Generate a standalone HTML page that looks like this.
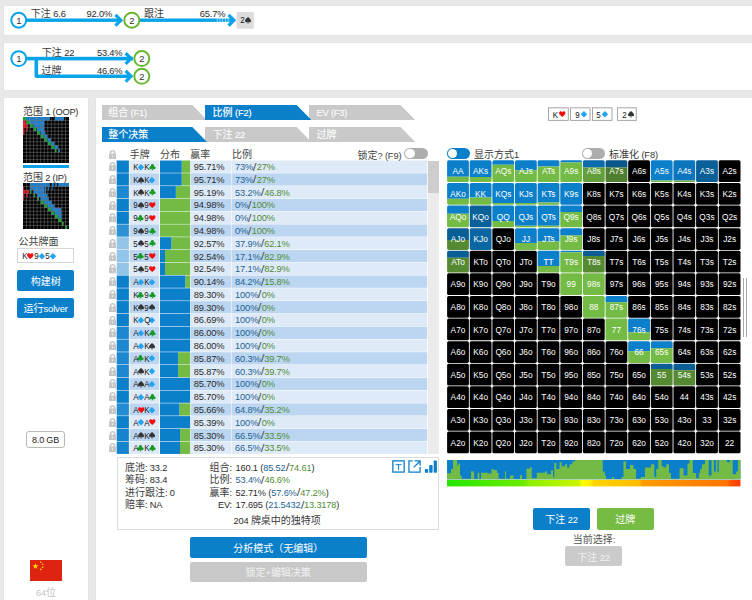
<!DOCTYPE html>
<html lang="zh"><head><meta charset="utf-8"><title>solver</title><style>
html,body{margin:0;padding:0}
body{width:752px;height:600px;overflow:hidden;position:relative;background:#e8e8e8;font-family:"Liberation Sans", "Noto Sans CJK SC", sans-serif;font-size:9px;color:#333}
.abs{position:absolute}
.panel{position:absolute;background:#fff;border-radius:1px;box-shadow:0 0 0 0.6px #e0e0e0}
.t{position:absolute;white-space:nowrap;overflow:visible;letter-spacing:-0.16px}
.tb{-webkit-text-stroke:0.15px currentColor}
.btn{text-align:center;font-size:9.3px}
span.cj{font-family:"Liberation Sans", "Noto Sans CJK SC", sans-serif;font-size:10px;letter-spacing:0;color:#3c3c3c}
svg.su{display:inline-block;overflow:visible}
.rk{display:inline-block;width:5px;text-align:center;transform:scaleX(.86);color:#141414}
.sl{display:inline-block;font-size:11px;line-height:0;width:3.5px;text-indent:0;color:#555;position:relative;top:0.5px;transform:scaleX(1.2)}
.mc{position:absolute;color:#fff;text-align:center;font-size:8.3px;overflow:hidden}
</style></head>
<body>
<svg width="0" height="0" style="position:absolute"><defs><path id="sh" d="M50 92C22 66 9 50 9 33 9 19 19 9 31 9c8 0 15 4 19 12 4-8 11-12 19-12 12 0 22 10 22 24 0 17-13 33-41 59z"/><path id="sd" d="M50 3Q72 26 95 50Q72 74 50 97Q28 74 5 50Q28 26 50 3z"/><path id="ss" d="M50 5C50 5 9 38 9 60c0 12 9 20 20 20 8 0 14-4 18-10-1 10-5 18-12 25h30c-7-7-11-15-12-25 4 6 10 10 18 10 11 0 20-8 20-20C91 38 50 5 50 5z"/><path id="sc" d="M50 5a20 20 0 0 1 14 34 20 20 0 1 1-11 31c1 10 5 18 12 25H35c7-7 11-15 12-25a20 20 0 1 1-11-31A20 20 0 0 1 50 5z"/></defs></svg>
<div class="panel" style="left:3.8px;top:5.7px;width:760px;height:29px"></div>
<div class="panel" style="left:3.8px;top:43px;width:760px;height:46.7px"></div>
<div class="panel" style="left:3.8px;top:98.2px;width:83.8px;height:520px"></div>
<div class="panel" style="left:95.7px;top:98.2px;width:670px;height:520px"></div>
<svg class="abs" style="left:100px;top:150px" width="345" height="310" viewBox="100 150 345 310"><rect x="116.7" y="160.50" width="12.2" height="12.28" fill="#0c7fcb"/><rect x="129.55" y="160.50" width="29.6" height="12.28" fill="#dfeaf8"/><rect x="181.744" y="160.50" width="8.456" height="12.28" fill="#73bb44"/><rect x="160" y="160.50" width="21.744" height="12.28" fill="#0c7fcb"/><rect x="190.75" y="160.50" width="40.3" height="12.28" fill="#dfeaf8"/><rect x="231.55" y="160.50" width="195.7" height="12.28" fill="#dfeaf8"/><rect x="116.7" y="173.28" width="12.2" height="12.28" fill="#0c7fcb"/><rect x="129.55" y="173.28" width="29.6" height="12.28" fill="#bcd6f2"/><rect x="181.744" y="173.28" width="8.456" height="12.28" fill="#73bb44"/><rect x="160" y="173.28" width="21.744" height="12.28" fill="#0c7fcb"/><rect x="190.75" y="173.28" width="40.3" height="12.28" fill="#bcd6f2"/><rect x="231.55" y="173.28" width="195.7" height="12.28" fill="#bcd6f2"/><rect x="116.7" y="186.06" width="12.2" height="12.28" fill="#1d88cf"/><rect x="129.55" y="186.06" width="29.6" height="12.28" fill="#dfeaf8"/><rect x="175.855" y="186.06" width="14.345" height="12.28" fill="#73bb44"/><rect x="160" y="186.06" width="15.855" height="12.28" fill="#0c7fcb"/><rect x="190.75" y="186.06" width="40.3" height="12.28" fill="#dfeaf8"/><rect x="231.55" y="186.06" width="195.7" height="12.28" fill="#dfeaf8"/><rect x="116.7" y="198.84" width="12.2" height="12.28" fill="#0c7fcb"/><rect x="129.55" y="198.84" width="29.6" height="12.28" fill="#bcd6f2"/><rect x="160" y="198.84" width="30.2" height="12.28" fill="#73bb44"/><rect x="190.75" y="198.84" width="40.3" height="12.28" fill="#bcd6f2"/><rect x="231.55" y="198.84" width="195.7" height="12.28" fill="#bcd6f2"/><rect x="116.7" y="211.62" width="12.2" height="12.28" fill="#0c7fcb"/><rect x="129.55" y="211.62" width="29.6" height="12.28" fill="#dfeaf8"/><rect x="160" y="211.62" width="30.2" height="12.28" fill="#73bb44"/><rect x="190.75" y="211.62" width="40.3" height="12.28" fill="#dfeaf8"/><rect x="231.55" y="211.62" width="195.7" height="12.28" fill="#dfeaf8"/><rect x="116.7" y="224.40" width="12.2" height="12.28" fill="#2e91d2"/><rect x="129.55" y="224.40" width="29.6" height="12.28" fill="#bcd6f2"/><rect x="160" y="224.40" width="30.2" height="12.28" fill="#73bb44"/><rect x="190.75" y="224.40" width="40.3" height="12.28" fill="#bcd6f2"/><rect x="231.55" y="224.40" width="195.7" height="12.28" fill="#bcd6f2"/><rect x="116.7" y="237.18" width="12.2" height="12.28" fill="#92c5e8"/><rect x="129.55" y="237.18" width="29.6" height="12.28" fill="#dfeaf8"/><rect x="171.325" y="237.18" width="18.875" height="12.28" fill="#73bb44"/><rect x="160" y="237.18" width="11.325" height="12.28" fill="#0c7fcb"/><rect x="190.75" y="237.18" width="40.3" height="12.28" fill="#dfeaf8"/><rect x="231.55" y="237.18" width="195.7" height="12.28" fill="#dfeaf8"/><rect x="116.7" y="249.96" width="12.2" height="12.28" fill="#92c5e8"/><rect x="129.55" y="249.96" width="29.6" height="12.28" fill="#bcd6f2"/><rect x="164.983" y="249.96" width="25.217" height="12.28" fill="#73bb44"/><rect x="160" y="249.96" width="4.983" height="12.28" fill="#0c7fcb"/><rect x="190.75" y="249.96" width="40.3" height="12.28" fill="#bcd6f2"/><rect x="231.55" y="249.96" width="195.7" height="12.28" fill="#bcd6f2"/><rect x="116.7" y="262.74" width="12.2" height="12.28" fill="#92c5e8"/><rect x="129.55" y="262.74" width="29.6" height="12.28" fill="#dfeaf8"/><rect x="164.983" y="262.74" width="25.217" height="12.28" fill="#73bb44"/><rect x="160" y="262.74" width="4.983" height="12.28" fill="#0c7fcb"/><rect x="190.75" y="262.74" width="40.3" height="12.28" fill="#dfeaf8"/><rect x="231.55" y="262.74" width="195.7" height="12.28" fill="#dfeaf8"/><rect x="116.7" y="275.52" width="12.2" height="12.28" fill="#0c7fcb"/><rect x="129.55" y="275.52" width="29.6" height="12.28" fill="#bcd6f2"/><rect x="185.368" y="275.52" width="4.832" height="12.28" fill="#73bb44"/><rect x="160" y="275.52" width="25.368" height="12.28" fill="#0c7fcb"/><rect x="190.75" y="275.52" width="40.3" height="12.28" fill="#bcd6f2"/><rect x="231.55" y="275.52" width="195.7" height="12.28" fill="#bcd6f2"/><rect x="116.7" y="288.30" width="12.2" height="12.28" fill="#0c7fcb"/><rect x="129.55" y="288.30" width="29.6" height="12.28" fill="#dfeaf8"/><rect x="160" y="288.30" width="30.2" height="12.28" fill="#0c7fcb"/><rect x="190.75" y="288.30" width="40.3" height="12.28" fill="#dfeaf8"/><rect x="231.55" y="288.30" width="195.7" height="12.28" fill="#dfeaf8"/><rect x="116.7" y="301.08" width="12.2" height="12.28" fill="#0c7fcb"/><rect x="129.55" y="301.08" width="29.6" height="12.28" fill="#bcd6f2"/><rect x="160" y="301.08" width="30.2" height="12.28" fill="#0c7fcb"/><rect x="190.75" y="301.08" width="40.3" height="12.28" fill="#bcd6f2"/><rect x="231.55" y="301.08" width="195.7" height="12.28" fill="#bcd6f2"/><rect x="116.7" y="313.86" width="12.2" height="12.28" fill="#0c7fcb"/><rect x="129.55" y="313.86" width="29.6" height="12.28" fill="#dfeaf8"/><rect x="160" y="313.86" width="30.2" height="12.28" fill="#0c7fcb"/><rect x="190.75" y="313.86" width="40.3" height="12.28" fill="#dfeaf8"/><rect x="231.55" y="313.86" width="195.7" height="12.28" fill="#dfeaf8"/><rect x="116.7" y="326.64" width="12.2" height="12.28" fill="#1d88cf"/><rect x="129.55" y="326.64" width="29.6" height="12.28" fill="#bcd6f2"/><rect x="160" y="326.64" width="30.2" height="12.28" fill="#0c7fcb"/><rect x="190.75" y="326.64" width="40.3" height="12.28" fill="#bcd6f2"/><rect x="231.55" y="326.64" width="195.7" height="12.28" fill="#bcd6f2"/><rect x="116.7" y="339.42" width="12.2" height="12.28" fill="#1d88cf"/><rect x="129.55" y="339.42" width="29.6" height="12.28" fill="#dfeaf8"/><rect x="160" y="339.42" width="30.2" height="12.28" fill="#0c7fcb"/><rect x="190.75" y="339.42" width="40.3" height="12.28" fill="#dfeaf8"/><rect x="231.55" y="339.42" width="195.7" height="12.28" fill="#dfeaf8"/><rect x="116.7" y="352.20" width="12.2" height="12.28" fill="#1d88cf"/><rect x="129.55" y="352.20" width="29.6" height="12.28" fill="#bcd6f2"/><rect x="178.12" y="352.20" width="12.08" height="12.28" fill="#73bb44"/><rect x="160" y="352.20" width="18.12" height="12.28" fill="#0c7fcb"/><rect x="190.75" y="352.20" width="40.3" height="12.28" fill="#bcd6f2"/><rect x="231.55" y="352.20" width="195.7" height="12.28" fill="#bcd6f2"/><rect x="116.7" y="364.98" width="12.2" height="12.28" fill="#1d88cf"/><rect x="129.55" y="364.98" width="29.6" height="12.28" fill="#dfeaf8"/><rect x="178.12" y="364.98" width="12.08" height="12.28" fill="#73bb44"/><rect x="160" y="364.98" width="18.12" height="12.28" fill="#0c7fcb"/><rect x="190.75" y="364.98" width="40.3" height="12.28" fill="#dfeaf8"/><rect x="231.55" y="364.98" width="195.7" height="12.28" fill="#dfeaf8"/><rect x="116.7" y="377.76" width="12.2" height="12.28" fill="#0c7fcb"/><rect x="129.55" y="377.76" width="29.6" height="12.28" fill="#bcd6f2"/><rect x="160" y="377.76" width="30.2" height="12.28" fill="#0c7fcb"/><rect x="190.75" y="377.76" width="40.3" height="12.28" fill="#bcd6f2"/><rect x="231.55" y="377.76" width="195.7" height="12.28" fill="#bcd6f2"/><rect x="116.7" y="390.54" width="12.2" height="12.28" fill="#0c7fcb"/><rect x="129.55" y="390.54" width="29.6" height="12.28" fill="#dfeaf8"/><rect x="160" y="390.54" width="30.2" height="12.28" fill="#0c7fcb"/><rect x="190.75" y="390.54" width="40.3" height="12.28" fill="#dfeaf8"/><rect x="231.55" y="390.54" width="195.7" height="12.28" fill="#dfeaf8"/><rect x="116.7" y="403.32" width="12.2" height="12.28" fill="#248cd0"/><rect x="129.55" y="403.32" width="29.6" height="12.28" fill="#bcd6f2"/><rect x="179.479" y="403.32" width="10.721" height="12.28" fill="#73bb44"/><rect x="160" y="403.32" width="19.479" height="12.28" fill="#0c7fcb"/><rect x="190.75" y="403.32" width="40.3" height="12.28" fill="#bcd6f2"/><rect x="231.55" y="403.32" width="195.7" height="12.28" fill="#bcd6f2"/><rect x="116.7" y="416.10" width="12.2" height="12.28" fill="#0c7fcb"/><rect x="129.55" y="416.10" width="29.6" height="12.28" fill="#dfeaf8"/><rect x="160" y="416.10" width="30.2" height="12.28" fill="#0c7fcb"/><rect x="190.75" y="416.10" width="40.3" height="12.28" fill="#dfeaf8"/><rect x="231.55" y="416.10" width="195.7" height="12.28" fill="#dfeaf8"/><rect x="116.7" y="428.88" width="12.2" height="12.28" fill="#1684cd"/><rect x="129.55" y="428.88" width="29.6" height="12.28" fill="#bcd6f2"/><rect x="180.083" y="428.88" width="10.117" height="12.28" fill="#73bb44"/><rect x="160" y="428.88" width="20.083" height="12.28" fill="#0c7fcb"/><rect x="190.75" y="428.88" width="40.3" height="12.28" fill="#bcd6f2"/><rect x="231.55" y="428.88" width="195.7" height="12.28" fill="#bcd6f2"/><rect x="116.7" y="441.66" width="12.2" height="12.28" fill="#1684cd"/><rect x="129.55" y="441.66" width="29.6" height="12.28" fill="#dfeaf8"/><rect x="180.083" y="441.66" width="10.117" height="12.28" fill="#73bb44"/><rect x="160" y="441.66" width="20.083" height="12.28" fill="#0c7fcb"/><rect x="190.75" y="441.66" width="40.3" height="12.28" fill="#dfeaf8"/><rect x="231.55" y="441.66" width="195.7" height="12.28" fill="#dfeaf8"/></svg>
<svg class="abs" style="left:0;top:0" width="300" height="95" viewBox="0 0 300 95"><defs><pattern id="dsh" width="2.7" height="4" patternUnits="userSpaceOnUse" x="215"><rect width="2.1" height="4" fill="#09a3e9"/><rect x="2.1" width="0.6" height="4" fill="#9ad8f5"/></pattern></defs><rect x="26" y="18.5" width="93" height="3.4" fill="#09a3e9"/><polygon points="123.1,20.2 116.6,13.7 114.3,16.0 118.5,20.2 114.3,24.4 116.6,26.7" fill="#09a3e9"/><rect x="139" y="18.5" width="76" height="3.4" fill="#09a3e9"/><rect x="215" y="18.5" width="13.5" height="3.4" fill="url(#dsh)"/><rect x="228.5" y="18.5" width="4" height="3.4" fill="#09a3e9"/><polygon points="236.2,20.2 229.7,13.7 227.39999999999998,16.0 231.6,20.2 227.39999999999998,24.4 229.7,26.7" fill="#09a3e9"/><circle cx="18.75" cy="20.2" r="7.45" fill="#fff" stroke="#09a3e9" stroke-width="2"/><circle cx="131.8" cy="20.2" r="7.5" fill="#fff" stroke="#6ab82e" stroke-width="2"/><rect x="236.6" y="12" width="17.2" height="16.7" rx="1.5" fill="#dcdcdc"/><rect x="26" y="56.800000000000004" width="107" height="3.6" fill="#09a3e9"/><path d="M36.3,58.6 V76.1 q0,0.2 0.2,0.2 H130" fill="none" stroke="#09a3e9" stroke-width="3.6" stroke-linejoin="round"/><polygon points="133.3,58.6 126.80000000000001,52.1 124.50000000000001,54.4 128.70000000000002,58.6 124.50000000000001,62.800000000000004 126.80000000000001,65.1" fill="#09a3e9"/><polygon points="133.3,76.3 126.80000000000001,69.8 124.50000000000001,72.1 128.70000000000002,76.3 124.50000000000001,80.5 126.80000000000001,82.8" fill="#09a3e9"/><circle cx="18.75" cy="58.6" r="7.45" fill="#fff" stroke="#09a3e9" stroke-width="2"/><circle cx="141.8" cy="58.6" r="7.5" fill="#fff" stroke="#6ab82e" stroke-width="2"/><circle cx="141.8" cy="76.3" r="7.5" fill="#fff" stroke="#6ab82e" stroke-width="2"/></svg>
<div class="t" style="left:10.75px;top:13.66px;font-size:9.5px;line-height:13px;height:13px;color:#333;width:16px;text-align:center;">1</div>
<div class="t" style="left:123.8px;top:13.66px;font-size:9.5px;line-height:13px;height:13px;color:#333;width:16px;text-align:center;">2</div>
<div class="t" style="left:10.75px;top:52.06px;font-size:9.5px;line-height:13px;height:13px;color:#333;width:16px;text-align:center;">1</div>
<div class="t" style="left:133.8px;top:52.06px;font-size:9.5px;line-height:13px;height:13px;color:#333;width:16px;text-align:center;">2</div>
<div class="t" style="left:133.8px;top:69.76px;font-size:9.5px;line-height:13px;height:13px;color:#333;width:16px;text-align:center;">2</div>
<div class="t" style="left:30.8px;top:8.48px;font-size:9.3px;line-height:12px;height:12px;color:#2b2b2b;"><span class="cj">下注</span> 6.6</div>
<div class="t" style="left:86.6px;top:8.48px;font-size:9.3px;line-height:12px;height:12px;color:#2b2b2b;">92.0%</div>
<div class="t" style="left:143.9px;top:8.48px;font-size:9.3px;line-height:12px;height:12px;color:#2b2b2b;"><span class="cj">跟注</span></div>
<div class="t" style="left:199.8px;top:8.48px;font-size:9.3px;line-height:12px;height:12px;color:#2b2b2b;">65.7%</div>
<div class="t" style="left:239.7px;top:14.38px;font-size:9.3px;line-height:12px;height:12px;color:#2b2b2b;"><span class="rk">2</span><svg class="su" width="6.10" height="6.4" viewBox="8 4 84 92" preserveAspectRatio="none" style="vertical-align:0px;fill:#333;margin:0 0.15px"><use href="#ss"/></svg></div>
<div class="t" style="left:41.8px;top:46.78px;font-size:9.3px;line-height:12px;height:12px;color:#2b2b2b;"><span class="cj">下注</span> 22</div>
<div class="t" style="left:96.9px;top:46.78px;font-size:9.3px;line-height:12px;height:12px;color:#2b2b2b;">53.4%</div>
<div class="t" style="left:41.5px;top:65.38px;font-size:9.3px;line-height:12px;height:12px;color:#2b2b2b;"><span class="cj">过牌</span></div>
<div class="t" style="left:96.9px;top:65.28px;font-size:9.3px;line-height:12px;height:12px;color:#2b2b2b;">46.6%</div>
<div class="t" style="left:23px;top:105.78px;font-size:9.3px;line-height:12px;height:12px;color:#2b2b2b;letter-spacing:-0.25px;"><span class="cj">范围</span> 1 (OOP)</div>
<div class="t" style="left:23px;top:171.78px;font-size:9.3px;line-height:12px;height:12px;color:#2b2b2b;letter-spacing:-0.25px;"><span class="cj">范围</span> 2 (IP)</div>
<svg class="abs" style="left:23px;top:117px" width="46" height="46" viewBox="0 0 46 46"><rect width="46" height="46" fill="#000"/><rect x="0.00" y="0.00" width="3.54" height="3.54" fill="#12a53a"/><rect x="3.54" y="0.00" width="3.54" height="3.54" fill="#1b7fd0"/><rect x="7.08" y="0.00" width="3.54" height="3.54" fill="#1b7fd0"/><rect x="10.62" y="0.00" width="3.54" height="3.54" fill="#1b7fd0"/><rect x="14.15" y="0.00" width="3.54" height="3.54" fill="#1b7fd0"/><rect x="17.69" y="0.00" width="3.54" height="3.54" fill="#1b7fd0"/><rect x="21.23" y="0.00" width="3.54" height="3.54" fill="#1b7fd0"/><rect x="24.77" y="0.00" width="2.12" height="3.54" fill="#1b7fd0"/><rect x="31.85" y="0.00" width="3.54" height="3.54" fill="#1b7fd0"/><rect x="35.38" y="0.00" width="3.54" height="3.54" fill="#1b7fd0"/><rect x="38.92" y="0.00" width="2.12" height="3.54" fill="#1b7fd0"/><rect x="0.00" y="3.54" width="2.83" height="3.54" fill="#f0142a"/><rect x="3.54" y="3.54" width="3.54" height="3.54" fill="#12a53a"/><rect x="7.08" y="3.54" width="3.54" height="3.54" fill="#1b7fd0"/><rect x="10.62" y="3.54" width="3.54" height="3.54" fill="#1b7fd0"/><rect x="14.15" y="3.54" width="3.54" height="3.54" fill="#1b7fd0"/><rect x="17.69" y="3.54" width="3.54" height="3.54" fill="#1b7fd0"/><rect x="0.00" y="7.08" width="2.83" height="3.54" fill="#f0142a"/><rect x="3.54" y="7.08" width="1.59" height="3.54" fill="#f0142a"/><rect x="7.08" y="7.08" width="2.83" height="3.54" fill="#12a53a"/><rect x="10.62" y="7.08" width="3.54" height="3.54" fill="#1b7fd0"/><rect x="14.15" y="7.08" width="3.54" height="3.54" fill="#1b7fd0"/><rect x="17.69" y="7.08" width="3.54" height="3.54" fill="#1b7fd0"/><rect x="0.00" y="10.62" width="1.42" height="3.54" fill="#f0142a"/><rect x="3.54" y="10.62" width="1.24" height="3.54" fill="#f0142a"/><rect x="10.62" y="10.62" width="2.83" height="3.54" fill="#12a53a"/><rect x="14.15" y="10.62" width="3.54" height="3.54" fill="#1b7fd0"/><rect x="17.69" y="10.62" width="3.54" height="3.54" fill="#1b7fd0"/><rect x="0.00" y="14.15" width="1.42" height="3.54" fill="#f0142a"/><rect x="14.15" y="14.15" width="2.83" height="3.54" fill="#12a53a"/><rect x="17.69" y="14.15" width="3.54" height="3.54" fill="#1b7fd0"/><rect x="21.23" y="14.15" width="1.24" height="3.54" fill="#1b7fd0"/><rect x="17.69" y="17.69" width="3.18" height="3.54" fill="#12a53a"/><rect x="21.23" y="17.69" width="3.18" height="3.54" fill="#1b7fd0"/><rect x="21.23" y="21.23" width="3.18" height="3.54" fill="#12a53a"/><rect x="24.77" y="21.23" width="3.18" height="3.54" fill="#1b7fd0"/><rect x="24.77" y="24.77" width="3.18" height="3.54" fill="#12a53a"/><rect x="28.31" y="24.77" width="3.18" height="3.54" fill="#1b7fd0"/><rect x="28.31" y="28.31" width="3.18" height="3.54" fill="#12a53a"/><rect x="31.85" y="28.31" width="3.18" height="3.54" fill="#1b7fd0"/><rect x="31.85" y="31.85" width="1.77" height="3.54" fill="#12a53a"/><rect x="35.38" y="31.85" width="1.59" height="3.54" fill="#1b7fd0"/><path d="M3.54,0V46M0,3.54H46M7.08,0V46M0,7.08H46M10.62,0V46M0,10.62H46M14.15,0V46M0,14.15H46M17.69,0V46M0,17.69H46M21.23,0V46M0,21.23H46M24.77,0V46M0,24.77H46M28.31,0V46M0,28.31H46M31.85,0V46M0,31.85H46M35.38,0V46M0,35.38H46M38.92,0V46M0,38.92H46M42.46,0V46M0,42.46H46" stroke="#9a9a9a" stroke-width="0.45" fill="none" opacity="0.85"/></svg>
<div class="abs" style="left:23px;top:164.6px;width:46px;height:3.6px;background:#09a3e9"></div>
<svg class="abs" style="left:23px;top:183px" width="46" height="46" viewBox="0 0 46 46"><rect width="46" height="46" fill="#000"/><rect x="7.08" y="0.00" width="3.54" height="3.54" fill="#1b7fd0"/><rect x="10.62" y="0.00" width="3.54" height="3.54" fill="#1b7fd0"/><rect x="14.15" y="0.00" width="3.54" height="3.54" fill="#1b7fd0"/><rect x="17.69" y="0.00" width="3.54" height="3.54" fill="#1b7fd0"/><rect x="21.23" y="0.00" width="3.54" height="3.54" fill="#1b7fd0"/><rect x="25.12" y="0.00" width="1.77" height="3.54" fill="#1b7fd0"/><rect x="29.02" y="0.00" width="1.77" height="3.54" fill="#1b7fd0"/><rect x="32.20" y="0.00" width="1.77" height="3.54" fill="#1b7fd0"/><rect x="35.38" y="0.00" width="3.54" height="3.54" fill="#1b7fd0"/><rect x="38.92" y="0.00" width="3.54" height="3.54" fill="#1b7fd0"/><rect x="42.46" y="0.00" width="3.54" height="3.54" fill="#1b7fd0"/><rect x="0.00" y="3.54" width="0.88" height="3.54" fill="#f0142a"/><rect x="7.08" y="3.54" width="3.54" height="3.54" fill="#1b7fd0"/><rect x="10.62" y="3.54" width="3.54" height="3.54" fill="#1b7fd0"/><rect x="14.15" y="3.54" width="3.54" height="3.54" fill="#1b7fd0"/><rect x="17.69" y="3.54" width="3.54" height="3.54" fill="#1b7fd0"/><rect x="21.94" y="3.54" width="1.42" height="3.54" fill="#1b7fd0"/><rect x="25.12" y="3.54" width="1.06" height="3.54" fill="#1b7fd0"/><rect x="29.02" y="3.54" width="0.71" height="3.54" fill="#1b7fd0"/><rect x="0.00" y="7.08" width="2.65" height="3.54" fill="#f0142a"/><rect x="3.54" y="7.08" width="2.48" height="3.54" fill="#f0142a"/><rect x="7.08" y="7.08" width="1.42" height="3.54" fill="#12a53a"/><rect x="10.62" y="7.08" width="3.54" height="3.54" fill="#1b7fd0"/><rect x="14.15" y="7.08" width="3.54" height="3.54" fill="#1b7fd0"/><rect x="17.69" y="7.08" width="3.54" height="3.54" fill="#1b7fd0"/><rect x="21.94" y="7.08" width="1.06" height="3.54" fill="#1b7fd0"/><rect x="0.00" y="10.62" width="1.24" height="3.54" fill="#f0142a"/><rect x="3.54" y="10.62" width="1.06" height="3.54" fill="#f0142a"/><rect x="10.62" y="10.62" width="1.42" height="3.54" fill="#12a53a"/><rect x="14.15" y="10.62" width="3.54" height="3.54" fill="#1b7fd0"/><rect x="17.69" y="10.62" width="3.54" height="3.54" fill="#1b7fd0"/><rect x="21.23" y="10.62" width="3.18" height="3.54" fill="#1b7fd0"/><rect x="0.00" y="14.15" width="0.88" height="3.54" fill="#f0142a"/><rect x="14.15" y="14.15" width="1.77" height="3.54" fill="#12a53a"/><rect x="17.69" y="14.15" width="3.54" height="3.54" fill="#1b7fd0"/><rect x="21.23" y="14.15" width="3.54" height="3.54" fill="#1b7fd0"/><rect x="24.77" y="14.15" width="1.06" height="3.54" fill="#1b7fd0"/><rect x="17.69" y="17.69" width="3.18" height="3.54" fill="#12a53a"/><rect x="21.23" y="17.69" width="3.54" height="3.54" fill="#1b7fd0"/><rect x="24.77" y="17.69" width="3.18" height="3.54" fill="#1b7fd0"/><rect x="28.31" y="17.69" width="0.71" height="3.54" fill="#1b7fd0"/><rect x="21.23" y="21.23" width="3.18" height="3.54" fill="#12a53a"/><rect x="24.77" y="21.23" width="3.54" height="3.54" fill="#1b7fd0"/><rect x="28.31" y="21.23" width="3.18" height="3.54" fill="#1b7fd0"/><rect x="24.77" y="24.77" width="3.18" height="3.54" fill="#12a53a"/><rect x="28.31" y="24.77" width="3.54" height="3.54" fill="#1b7fd0"/><rect x="31.85" y="24.77" width="3.54" height="3.54" fill="#1b7fd0"/><rect x="35.38" y="24.77" width="2.83" height="3.54" fill="#1b7fd0"/><rect x="28.31" y="28.31" width="3.18" height="3.54" fill="#12a53a"/><rect x="31.85" y="28.31" width="3.54" height="3.54" fill="#1b7fd0"/><rect x="35.38" y="28.31" width="3.18" height="3.54" fill="#1b7fd0"/><rect x="31.85" y="31.85" width="3.18" height="3.54" fill="#12a53a"/><rect x="35.38" y="31.85" width="3.18" height="3.54" fill="#1b7fd0"/><rect x="35.38" y="35.38" width="3.18" height="3.54" fill="#12a53a"/><rect x="38.92" y="38.92" width="1.77" height="3.54" fill="#12a53a"/><rect x="42.46" y="42.46" width="1.77" height="3.54" fill="#12a53a"/><path d="M3.54,0V46M0,3.54H46M7.08,0V46M0,7.08H46M10.62,0V46M0,10.62H46M14.15,0V46M0,14.15H46M17.69,0V46M0,17.69H46M21.23,0V46M0,21.23H46M24.77,0V46M0,24.77H46M28.31,0V46M0,28.31H46M31.85,0V46M0,31.85H46M35.38,0V46M0,35.38H46M38.92,0V46M0,38.92H46M42.46,0V46M0,42.46H46" stroke="#9a9a9a" stroke-width="0.45" fill="none" opacity="0.85"/></svg>
<div class="t" style="left:18.6px;top:235.68px;font-size:9.3px;line-height:12px;height:12px;color:#2b2b2b;"><span class="cj">公共牌面</span></div>
<div class="abs" style="left:17.1px;top:248.2px;width:57px;height:14.8px;border:1px solid #d6d6d6;box-sizing:border-box;background:#fff"></div>
<div class="t" style="left:22.2px;top:250.08px;font-size:9.3px;line-height:12px;height:12px;color:#2b2b2b;"><span class="rk">K</span><svg class="su" width="6.50" height="6.4" viewBox="8 4 84 92" preserveAspectRatio="none" style="vertical-align:0px;fill:#f00d0d;margin:0 -0.05px"><use href="#sh"/></svg><span class="rk">9</span><svg class="su" width="5.90" height="6.4" viewBox="8 4 84 92" preserveAspectRatio="none" style="vertical-align:0px;fill:#22a4f0;margin:0 0.25px"><use href="#sd"/></svg><span class="rk">5</span><svg class="su" width="5.90" height="6.4" viewBox="8 4 84 92" preserveAspectRatio="none" style="vertical-align:0px;fill:#22a4f0;margin:0 0.25px"><use href="#sd"/></svg></div>
<div class="t btn" style="left:17.1px;top:270px;width:57.1px;height:21px;line-height:23.2px;background:#0c7fcb;color:#fff;border-radius:2px"><span class="cj" style="color:#fff">构建树</span></div>
<div class="t btn" style="left:17.1px;top:297.8px;width:57.1px;height:20.7px;line-height:22.9px;background:#0c7fcb;color:#fff;border-radius:2px"><span class="cj" style="color:#fff">运行</span><span style="font-size:9.5px">solver</span></div>
<div class="t" style="left:26px;top:430.5px;width:39px;height:17.5px;line-height:16.5px;border:1px solid #b8b8b8;border-radius:3px;box-sizing:border-box;text-align:center;font-size:9px;color:#222;background:#fff">8.0 GB</div>
<svg class="abs" style="left:30px;top:560px" width="32" height="21" viewBox="0 0 32 21"><rect width="32" height="21" fill="#de2410"/><polygon points="5.5,3.1 6.2,5.3 8.5,5.3 6.7,6.7 7.3,8.9 5.5,7.6 3.7,8.9 4.3,6.7 2.5,5.3 4.8,5.3" fill="#ffde00"/><circle cx="10.7" cy="2.3" r="0.8" fill="#ffde00"/><circle cx="12.7" cy="4.3" r="0.8" fill="#ffde00"/><circle cx="12.7" cy="7.3" r="0.8" fill="#ffde00"/><circle cx="10.7" cy="9.4" r="0.8" fill="#ffde00"/></svg>
<div class="t" style="left:36px;top:586.78px;font-size:9.3px;line-height:12px;height:12px;color:#c4c4c4;">64<span class="cj" style="color:#c4c4c4">位</span></div>
<svg class="abs" style="left:102px;top:104.8px" width="105.1" height="15" viewBox="0 0 105.1 15"><polygon points="0,0 90.3,0 105.1,15 0,15" fill="#c9c9c9"/></svg><div class="t tb" style="left:108.2px;top:106.58px;font-size:9.3px;line-height:12px;height:12px;color:#fff;"><span class="cj" style="color:#fbfbfb">组合</span><span style="color:#fbfbfb"> (F1)</span></div>
<svg class="abs" style="left:309.2px;top:104.8px" width="106.3" height="15" viewBox="0 0 106.3 15"><polygon points="0,0 91.5,0 106.3,15 0,15" fill="#c9c9c9"/></svg><div class="t tb" style="left:316.4px;top:106.58px;font-size:9.3px;line-height:12px;height:12px;color:#fff;"><span style="color:#fbfbfb">EV (F3)</span></div>
<svg class="abs" style="left:204.9px;top:104.8px" width="106.5" height="15" viewBox="0 0 106.5 15"><polygon points="0,0 91.7,0 106.5,15 0,15" fill="#0c7fcb"/></svg><div class="t tb" style="left:212.6px;top:106.58px;font-size:9.3px;line-height:12px;height:12px;color:#fff;"><span class="cj" style="color:#fff">比例</span> (F2)</div>
<svg class="abs" style="left:204.9px;top:127px" width="106.5" height="15" viewBox="0 0 106.5 15"><polygon points="0,0 91.7,0 106.5,15 0,15" fill="#c9c9c9"/></svg><div class="t tb" style="left:212.6px;top:128.78px;font-size:9.3px;line-height:12px;height:12px;color:#fff;"><span class="cj" style="color:#fbfbfb">下注</span><span style="color:#fbfbfb"> 22</span></div>
<svg class="abs" style="left:309.2px;top:127px" width="106.3" height="15" viewBox="0 0 106.3 15"><polygon points="0,0 91.5,0 106.3,15 0,15" fill="#c9c9c9"/></svg><div class="t tb" style="left:316.4px;top:128.78px;font-size:9.3px;line-height:12px;height:12px;color:#fff;"><span class="cj" style="color:#fbfbfb">过牌</span></div>
<svg class="abs" style="left:102px;top:127px" width="105.1" height="15" viewBox="0 0 105.1 15"><polygon points="0,0 90.3,0 105.1,15 0,15" fill="#0c7fcb"/></svg><div class="t tb" style="left:108.2px;top:128.78px;font-size:9.3px;line-height:12px;height:12px;color:#fff;"><span class="cj" style="color:#fff">整个决策</span></div>
<svg class="abs" style="left:108.8px;top:149.50px" width="7.2" height="9.2" viewBox="0 0 72 92"><path d="M7 42V30C7 12 19 1 36 1S65 12 65 30V42H50V30C50 21 44 15 36 15S22 21 22 30V42z" fill="#c6c6c6"/><rect x="0" y="36" width="72" height="56" rx="6" fill="#c6c6c6"/><rect x="32" y="52" width="8" height="20" rx="3" fill="#f4f4f4"/></svg>
<div class="t" style="left:129.8px;top:149.18px;font-size:9.3px;line-height:12px;height:12px;color:#2b2b2b;"><span class="cj" style="color:#444">手牌</span></div>
<div class="t" style="left:160px;top:149.18px;font-size:9.3px;line-height:12px;height:12px;color:#2b2b2b;"><span class="cj" style="color:#444">分布</span></div>
<div class="t" style="left:190.2px;top:149.18px;font-size:9.3px;line-height:12px;height:12px;color:#2b2b2b;"><span class="cj" style="color:#444">赢率</span></div>
<div class="t" style="left:232px;top:149.18px;font-size:9.3px;line-height:12px;height:12px;color:#2b2b2b;"><span class="cj" style="color:#444">比例</span></div>
<div class="t" style="left:357.5px;top:149.78px;font-size:9.3px;line-height:12px;height:12px;color:#444;"><span class="cj" style="color:#444">锁定</span>? (F9)</div>
<div class="abs" style="left:404px;top:147.8px;width:23.5px;height:11.5px;border-radius:6px;background:#adadad"></div><div class="abs" style="left:404.9px;top:148.7px;width:9.7px;height:9.7px;border-radius:5px;background:#fff"></div>
<svg class="abs" style="left:108.8px;top:162.20px" width="7.2" height="9.2" viewBox="0 0 72 92"><path d="M7 42V30C7 12 19 1 36 1S65 12 65 30V42H50V30C50 21 44 15 36 15S22 21 22 30V42z" fill="#c6c6c6"/><rect x="0" y="36" width="72" height="56" rx="6" fill="#c6c6c6"/><rect x="32" y="52" width="8" height="20" rx="3" fill="#f4f4f4"/></svg>
<div class="t" style="left:132.6px;top:161.13px;font-size:9.3px;line-height:12px;height:12px;color:#2b2b2b;"><span class="rk">K</span><svg class="su" width="5.90" height="6.4" viewBox="8 4 84 92" preserveAspectRatio="none" style="vertical-align:0px;fill:#22a4f0;margin:0 0.25px"><use href="#sd"/></svg><span class="rk">K</span><svg class="su" width="6.90" height="6.4" viewBox="8 4 84 92" preserveAspectRatio="none" style="vertical-align:0px;fill:#149a22;margin:0 -0.25px"><use href="#sc"/></svg></div>
<div class="t" style="left:193.7px;top:161.13px;font-size:9.3px;line-height:12px;height:12px;color:#2b2b2b;">95.71%</div>
<div class="t" style="left:235.1px;top:161.13px;font-size:9.3px;line-height:12px;height:12px;color:#2b2b2b;"><span style="color:#1d6494">73%</span><span class="sl">/</span><span style="color:#4f8c33">27%</span></div>
<svg class="abs" style="left:108.8px;top:174.98px" width="7.2" height="9.2" viewBox="0 0 72 92"><path d="M7 42V30C7 12 19 1 36 1S65 12 65 30V42H50V30C50 21 44 15 36 15S22 21 22 30V42z" fill="#c6c6c6"/><rect x="0" y="36" width="72" height="56" rx="6" fill="#c6c6c6"/><rect x="32" y="52" width="8" height="20" rx="3" fill="#f4f4f4"/></svg>
<div class="t" style="left:132.6px;top:173.91px;font-size:9.3px;line-height:12px;height:12px;color:#2b2b2b;"><span class="rk">K</span><svg class="su" width="6.10" height="6.4" viewBox="8 4 84 92" preserveAspectRatio="none" style="vertical-align:0px;fill:#333;margin:0 0.15px"><use href="#ss"/></svg><span class="rk">K</span><svg class="su" width="5.90" height="6.4" viewBox="8 4 84 92" preserveAspectRatio="none" style="vertical-align:0px;fill:#22a4f0;margin:0 0.25px"><use href="#sd"/></svg></div>
<div class="t" style="left:193.7px;top:173.91px;font-size:9.3px;line-height:12px;height:12px;color:#2b2b2b;">95.71%</div>
<div class="t" style="left:235.1px;top:173.91px;font-size:9.3px;line-height:12px;height:12px;color:#2b2b2b;"><span style="color:#1d6494">73%</span><span class="sl">/</span><span style="color:#4f8c33">27%</span></div>
<svg class="abs" style="left:108.8px;top:187.76px" width="7.2" height="9.2" viewBox="0 0 72 92"><path d="M7 42V30C7 12 19 1 36 1S65 12 65 30V42H50V30C50 21 44 15 36 15S22 21 22 30V42z" fill="#c6c6c6"/><rect x="0" y="36" width="72" height="56" rx="6" fill="#c6c6c6"/><rect x="32" y="52" width="8" height="20" rx="3" fill="#f4f4f4"/></svg>
<div class="t" style="left:132.6px;top:186.69px;font-size:9.3px;line-height:12px;height:12px;color:#2b2b2b;"><span class="rk">K</span><svg class="su" width="6.10" height="6.4" viewBox="8 4 84 92" preserveAspectRatio="none" style="vertical-align:0px;fill:#333;margin:0 0.15px"><use href="#ss"/></svg><span class="rk">K</span><svg class="su" width="6.90" height="6.4" viewBox="8 4 84 92" preserveAspectRatio="none" style="vertical-align:0px;fill:#149a22;margin:0 -0.25px"><use href="#sc"/></svg></div>
<div class="t" style="left:193.7px;top:186.69px;font-size:9.3px;line-height:12px;height:12px;color:#2b2b2b;">95.19%</div>
<div class="t" style="left:235.1px;top:186.69px;font-size:9.3px;line-height:12px;height:12px;color:#2b2b2b;"><span style="color:#1d6494">53.2%</span><span class="sl">/</span><span style="color:#4f8c33">46.8%</span></div>
<svg class="abs" style="left:108.8px;top:200.54px" width="7.2" height="9.2" viewBox="0 0 72 92"><path d="M7 42V30C7 12 19 1 36 1S65 12 65 30V42H50V30C50 21 44 15 36 15S22 21 22 30V42z" fill="#c6c6c6"/><rect x="0" y="36" width="72" height="56" rx="6" fill="#c6c6c6"/><rect x="32" y="52" width="8" height="20" rx="3" fill="#f4f4f4"/></svg>
<div class="t" style="left:132.6px;top:199.47px;font-size:9.3px;line-height:12px;height:12px;color:#2b2b2b;"><span class="rk">9</span><svg class="su" width="6.10" height="6.4" viewBox="8 4 84 92" preserveAspectRatio="none" style="vertical-align:0px;fill:#333;margin:0 0.15px"><use href="#ss"/></svg><span class="rk">9</span><svg class="su" width="6.50" height="6.4" viewBox="8 4 84 92" preserveAspectRatio="none" style="vertical-align:0px;fill:#f00d0d;margin:0 -0.05px"><use href="#sh"/></svg></div>
<div class="t" style="left:193.7px;top:199.47px;font-size:9.3px;line-height:12px;height:12px;color:#2b2b2b;">94.98%</div>
<div class="t" style="left:235.1px;top:199.47px;font-size:9.3px;line-height:12px;height:12px;color:#2b2b2b;"><span style="color:#1d6494">0%</span><span class="sl">/</span><span style="color:#4f8c33">100%</span></div>
<svg class="abs" style="left:108.8px;top:213.32px" width="7.2" height="9.2" viewBox="0 0 72 92"><path d="M7 42V30C7 12 19 1 36 1S65 12 65 30V42H50V30C50 21 44 15 36 15S22 21 22 30V42z" fill="#c6c6c6"/><rect x="0" y="36" width="72" height="56" rx="6" fill="#c6c6c6"/><rect x="32" y="52" width="8" height="20" rx="3" fill="#f4f4f4"/></svg>
<div class="t" style="left:132.6px;top:212.25px;font-size:9.3px;line-height:12px;height:12px;color:#2b2b2b;"><span class="rk">9</span><svg class="su" width="6.90" height="6.4" viewBox="8 4 84 92" preserveAspectRatio="none" style="vertical-align:0px;fill:#149a22;margin:0 -0.25px"><use href="#sc"/></svg><span class="rk">9</span><svg class="su" width="6.50" height="6.4" viewBox="8 4 84 92" preserveAspectRatio="none" style="vertical-align:0px;fill:#f00d0d;margin:0 -0.05px"><use href="#sh"/></svg></div>
<div class="t" style="left:193.7px;top:212.25px;font-size:9.3px;line-height:12px;height:12px;color:#2b2b2b;">94.98%</div>
<div class="t" style="left:235.1px;top:212.25px;font-size:9.3px;line-height:12px;height:12px;color:#2b2b2b;"><span style="color:#1d6494">0%</span><span class="sl">/</span><span style="color:#4f8c33">100%</span></div>
<svg class="abs" style="left:108.8px;top:226.10px" width="7.2" height="9.2" viewBox="0 0 72 92"><path d="M7 42V30C7 12 19 1 36 1S65 12 65 30V42H50V30C50 21 44 15 36 15S22 21 22 30V42z" fill="#c6c6c6"/><rect x="0" y="36" width="72" height="56" rx="6" fill="#c6c6c6"/><rect x="32" y="52" width="8" height="20" rx="3" fill="#f4f4f4"/></svg>
<div class="t" style="left:132.6px;top:225.03px;font-size:9.3px;line-height:12px;height:12px;color:#2b2b2b;"><span class="rk">9</span><svg class="su" width="6.10" height="6.4" viewBox="8 4 84 92" preserveAspectRatio="none" style="vertical-align:0px;fill:#333;margin:0 0.15px"><use href="#ss"/></svg><span class="rk">9</span><svg class="su" width="6.90" height="6.4" viewBox="8 4 84 92" preserveAspectRatio="none" style="vertical-align:0px;fill:#149a22;margin:0 -0.25px"><use href="#sc"/></svg></div>
<div class="t" style="left:193.7px;top:225.03px;font-size:9.3px;line-height:12px;height:12px;color:#2b2b2b;">94.98%</div>
<div class="t" style="left:235.1px;top:225.03px;font-size:9.3px;line-height:12px;height:12px;color:#2b2b2b;"><span style="color:#1d6494">0%</span><span class="sl">/</span><span style="color:#4f8c33">100%</span></div>
<svg class="abs" style="left:108.8px;top:238.88px" width="7.2" height="9.2" viewBox="0 0 72 92"><path d="M7 42V30C7 12 19 1 36 1S65 12 65 30V42H50V30C50 21 44 15 36 15S22 21 22 30V42z" fill="#c6c6c6"/><rect x="0" y="36" width="72" height="56" rx="6" fill="#c6c6c6"/><rect x="32" y="52" width="8" height="20" rx="3" fill="#f4f4f4"/></svg>
<div class="t" style="left:132.6px;top:237.81px;font-size:9.3px;line-height:12px;height:12px;color:#2b2b2b;"><span class="rk">5</span><svg class="su" width="6.10" height="6.4" viewBox="8 4 84 92" preserveAspectRatio="none" style="vertical-align:0px;fill:#333;margin:0 0.15px"><use href="#ss"/></svg><span class="rk">5</span><svg class="su" width="6.90" height="6.4" viewBox="8 4 84 92" preserveAspectRatio="none" style="vertical-align:0px;fill:#149a22;margin:0 -0.25px"><use href="#sc"/></svg></div>
<div class="t" style="left:193.7px;top:237.81px;font-size:9.3px;line-height:12px;height:12px;color:#2b2b2b;">92.57%</div>
<div class="t" style="left:235.1px;top:237.81px;font-size:9.3px;line-height:12px;height:12px;color:#2b2b2b;"><span style="color:#1d6494">37.9%</span><span class="sl">/</span><span style="color:#4f8c33">62.1%</span></div>
<svg class="abs" style="left:108.8px;top:251.66px" width="7.2" height="9.2" viewBox="0 0 72 92"><path d="M7 42V30C7 12 19 1 36 1S65 12 65 30V42H50V30C50 21 44 15 36 15S22 21 22 30V42z" fill="#c6c6c6"/><rect x="0" y="36" width="72" height="56" rx="6" fill="#c6c6c6"/><rect x="32" y="52" width="8" height="20" rx="3" fill="#f4f4f4"/></svg>
<div class="t" style="left:132.6px;top:250.59px;font-size:9.3px;line-height:12px;height:12px;color:#2b2b2b;"><span class="rk">5</span><svg class="su" width="6.90" height="6.4" viewBox="8 4 84 92" preserveAspectRatio="none" style="vertical-align:0px;fill:#149a22;margin:0 -0.25px"><use href="#sc"/></svg><span class="rk">5</span><svg class="su" width="6.50" height="6.4" viewBox="8 4 84 92" preserveAspectRatio="none" style="vertical-align:0px;fill:#f00d0d;margin:0 -0.05px"><use href="#sh"/></svg></div>
<div class="t" style="left:193.7px;top:250.59px;font-size:9.3px;line-height:12px;height:12px;color:#2b2b2b;">92.54%</div>
<div class="t" style="left:235.1px;top:250.59px;font-size:9.3px;line-height:12px;height:12px;color:#2b2b2b;"><span style="color:#1d6494">17.1%</span><span class="sl">/</span><span style="color:#4f8c33">82.9%</span></div>
<svg class="abs" style="left:108.8px;top:264.44px" width="7.2" height="9.2" viewBox="0 0 72 92"><path d="M7 42V30C7 12 19 1 36 1S65 12 65 30V42H50V30C50 21 44 15 36 15S22 21 22 30V42z" fill="#c6c6c6"/><rect x="0" y="36" width="72" height="56" rx="6" fill="#c6c6c6"/><rect x="32" y="52" width="8" height="20" rx="3" fill="#f4f4f4"/></svg>
<div class="t" style="left:132.6px;top:263.37px;font-size:9.3px;line-height:12px;height:12px;color:#2b2b2b;"><span class="rk">5</span><svg class="su" width="6.10" height="6.4" viewBox="8 4 84 92" preserveAspectRatio="none" style="vertical-align:0px;fill:#333;margin:0 0.15px"><use href="#ss"/></svg><span class="rk">5</span><svg class="su" width="6.50" height="6.4" viewBox="8 4 84 92" preserveAspectRatio="none" style="vertical-align:0px;fill:#f00d0d;margin:0 -0.05px"><use href="#sh"/></svg></div>
<div class="t" style="left:193.7px;top:263.37px;font-size:9.3px;line-height:12px;height:12px;color:#2b2b2b;">92.54%</div>
<div class="t" style="left:235.1px;top:263.37px;font-size:9.3px;line-height:12px;height:12px;color:#2b2b2b;"><span style="color:#1d6494">17.1%</span><span class="sl">/</span><span style="color:#4f8c33">82.9%</span></div>
<svg class="abs" style="left:108.8px;top:277.22px" width="7.2" height="9.2" viewBox="0 0 72 92"><path d="M7 42V30C7 12 19 1 36 1S65 12 65 30V42H50V30C50 21 44 15 36 15S22 21 22 30V42z" fill="#c6c6c6"/><rect x="0" y="36" width="72" height="56" rx="6" fill="#c6c6c6"/><rect x="32" y="52" width="8" height="20" rx="3" fill="#f4f4f4"/></svg>
<div class="t" style="left:132.6px;top:276.15px;font-size:9.3px;line-height:12px;height:12px;color:#2b2b2b;"><span class="rk">A</span><svg class="su" width="5.90" height="6.4" viewBox="8 4 84 92" preserveAspectRatio="none" style="vertical-align:0px;fill:#22a4f0;margin:0 0.25px"><use href="#sd"/></svg><span class="rk">K</span><svg class="su" width="5.90" height="6.4" viewBox="8 4 84 92" preserveAspectRatio="none" style="vertical-align:0px;fill:#22a4f0;margin:0 0.25px"><use href="#sd"/></svg></div>
<div class="t" style="left:193.7px;top:276.15px;font-size:9.3px;line-height:12px;height:12px;color:#2b2b2b;">90.14%</div>
<div class="t" style="left:235.1px;top:276.15px;font-size:9.3px;line-height:12px;height:12px;color:#2b2b2b;"><span style="color:#1d6494">84.2%</span><span class="sl">/</span><span style="color:#4f8c33">15.8%</span></div>
<svg class="abs" style="left:108.8px;top:290.00px" width="7.2" height="9.2" viewBox="0 0 72 92"><path d="M7 42V30C7 12 19 1 36 1S65 12 65 30V42H50V30C50 21 44 15 36 15S22 21 22 30V42z" fill="#c6c6c6"/><rect x="0" y="36" width="72" height="56" rx="6" fill="#c6c6c6"/><rect x="32" y="52" width="8" height="20" rx="3" fill="#f4f4f4"/></svg>
<div class="t" style="left:132.6px;top:288.93px;font-size:9.3px;line-height:12px;height:12px;color:#2b2b2b;"><span class="rk">K</span><svg class="su" width="6.90" height="6.4" viewBox="8 4 84 92" preserveAspectRatio="none" style="vertical-align:0px;fill:#149a22;margin:0 -0.25px"><use href="#sc"/></svg><span class="rk">9</span><svg class="su" width="6.90" height="6.4" viewBox="8 4 84 92" preserveAspectRatio="none" style="vertical-align:0px;fill:#149a22;margin:0 -0.25px"><use href="#sc"/></svg></div>
<div class="t" style="left:193.7px;top:288.93px;font-size:9.3px;line-height:12px;height:12px;color:#2b2b2b;">89.30%</div>
<div class="t" style="left:235.1px;top:288.93px;font-size:9.3px;line-height:12px;height:12px;color:#2b2b2b;"><span style="color:#1d6494">100%</span><span class="sl">/</span><span style="color:#4f8c33">0%</span></div>
<svg class="abs" style="left:108.8px;top:302.78px" width="7.2" height="9.2" viewBox="0 0 72 92"><path d="M7 42V30C7 12 19 1 36 1S65 12 65 30V42H50V30C50 21 44 15 36 15S22 21 22 30V42z" fill="#c6c6c6"/><rect x="0" y="36" width="72" height="56" rx="6" fill="#c6c6c6"/><rect x="32" y="52" width="8" height="20" rx="3" fill="#f4f4f4"/></svg>
<div class="t" style="left:132.6px;top:301.71px;font-size:9.3px;line-height:12px;height:12px;color:#2b2b2b;"><span class="rk">K</span><svg class="su" width="6.10" height="6.4" viewBox="8 4 84 92" preserveAspectRatio="none" style="vertical-align:0px;fill:#333;margin:0 0.15px"><use href="#ss"/></svg><span class="rk">9</span><svg class="su" width="6.10" height="6.4" viewBox="8 4 84 92" preserveAspectRatio="none" style="vertical-align:0px;fill:#333;margin:0 0.15px"><use href="#ss"/></svg></div>
<div class="t" style="left:193.7px;top:301.71px;font-size:9.3px;line-height:12px;height:12px;color:#2b2b2b;">89.30%</div>
<div class="t" style="left:235.1px;top:301.71px;font-size:9.3px;line-height:12px;height:12px;color:#2b2b2b;"><span style="color:#1d6494">100%</span><span class="sl">/</span><span style="color:#4f8c33">0%</span></div>
<svg class="abs" style="left:108.8px;top:315.56px" width="7.2" height="9.2" viewBox="0 0 72 92"><path d="M7 42V30C7 12 19 1 36 1S65 12 65 30V42H50V30C50 21 44 15 36 15S22 21 22 30V42z" fill="#c6c6c6"/><rect x="0" y="36" width="72" height="56" rx="6" fill="#c6c6c6"/><rect x="32" y="52" width="8" height="20" rx="3" fill="#f4f4f4"/></svg>
<div class="t" style="left:132.6px;top:314.49px;font-size:9.3px;line-height:12px;height:12px;color:#2b2b2b;"><span class="rk">K</span><svg class="su" width="5.90" height="6.4" viewBox="8 4 84 92" preserveAspectRatio="none" style="vertical-align:0px;fill:#22a4f0;margin:0 0.25px"><use href="#sd"/></svg><span class="rk">Q</span><svg class="su" width="5.90" height="6.4" viewBox="8 4 84 92" preserveAspectRatio="none" style="vertical-align:0px;fill:#22a4f0;margin:0 0.25px"><use href="#sd"/></svg></div>
<div class="t" style="left:193.7px;top:314.49px;font-size:9.3px;line-height:12px;height:12px;color:#2b2b2b;">86.69%</div>
<div class="t" style="left:235.1px;top:314.49px;font-size:9.3px;line-height:12px;height:12px;color:#2b2b2b;"><span style="color:#1d6494">100%</span><span class="sl">/</span><span style="color:#4f8c33">0%</span></div>
<svg class="abs" style="left:108.8px;top:328.34px" width="7.2" height="9.2" viewBox="0 0 72 92"><path d="M7 42V30C7 12 19 1 36 1S65 12 65 30V42H50V30C50 21 44 15 36 15S22 21 22 30V42z" fill="#c6c6c6"/><rect x="0" y="36" width="72" height="56" rx="6" fill="#c6c6c6"/><rect x="32" y="52" width="8" height="20" rx="3" fill="#f4f4f4"/></svg>
<div class="t" style="left:132.6px;top:327.27px;font-size:9.3px;line-height:12px;height:12px;color:#2b2b2b;"><span class="rk">A</span><svg class="su" width="5.90" height="6.4" viewBox="8 4 84 92" preserveAspectRatio="none" style="vertical-align:0px;fill:#22a4f0;margin:0 0.25px"><use href="#sd"/></svg><span class="rk">K</span><svg class="su" width="6.90" height="6.4" viewBox="8 4 84 92" preserveAspectRatio="none" style="vertical-align:0px;fill:#149a22;margin:0 -0.25px"><use href="#sc"/></svg></div>
<div class="t" style="left:193.7px;top:327.27px;font-size:9.3px;line-height:12px;height:12px;color:#2b2b2b;">86.00%</div>
<div class="t" style="left:235.1px;top:327.27px;font-size:9.3px;line-height:12px;height:12px;color:#2b2b2b;"><span style="color:#1d6494">100%</span><span class="sl">/</span><span style="color:#4f8c33">0%</span></div>
<svg class="abs" style="left:108.8px;top:341.12px" width="7.2" height="9.2" viewBox="0 0 72 92"><path d="M7 42V30C7 12 19 1 36 1S65 12 65 30V42H50V30C50 21 44 15 36 15S22 21 22 30V42z" fill="#c6c6c6"/><rect x="0" y="36" width="72" height="56" rx="6" fill="#c6c6c6"/><rect x="32" y="52" width="8" height="20" rx="3" fill="#f4f4f4"/></svg>
<div class="t" style="left:132.6px;top:340.05px;font-size:9.3px;line-height:12px;height:12px;color:#2b2b2b;"><span class="rk">A</span><svg class="su" width="5.90" height="6.4" viewBox="8 4 84 92" preserveAspectRatio="none" style="vertical-align:0px;fill:#22a4f0;margin:0 0.25px"><use href="#sd"/></svg><span class="rk">K</span><svg class="su" width="6.10" height="6.4" viewBox="8 4 84 92" preserveAspectRatio="none" style="vertical-align:0px;fill:#333;margin:0 0.15px"><use href="#ss"/></svg></div>
<div class="t" style="left:193.7px;top:340.05px;font-size:9.3px;line-height:12px;height:12px;color:#2b2b2b;">86.00%</div>
<div class="t" style="left:235.1px;top:340.05px;font-size:9.3px;line-height:12px;height:12px;color:#2b2b2b;"><span style="color:#1d6494">100%</span><span class="sl">/</span><span style="color:#4f8c33">0%</span></div>
<svg class="abs" style="left:108.8px;top:353.90px" width="7.2" height="9.2" viewBox="0 0 72 92"><path d="M7 42V30C7 12 19 1 36 1S65 12 65 30V42H50V30C50 21 44 15 36 15S22 21 22 30V42z" fill="#c6c6c6"/><rect x="0" y="36" width="72" height="56" rx="6" fill="#c6c6c6"/><rect x="32" y="52" width="8" height="20" rx="3" fill="#f4f4f4"/></svg>
<div class="t" style="left:132.6px;top:352.83px;font-size:9.3px;line-height:12px;height:12px;color:#2b2b2b;"><span class="rk">A</span><svg class="su" width="6.90" height="6.4" viewBox="8 4 84 92" preserveAspectRatio="none" style="vertical-align:0px;fill:#149a22;margin:0 -0.25px"><use href="#sc"/></svg><span class="rk">K</span><svg class="su" width="5.90" height="6.4" viewBox="8 4 84 92" preserveAspectRatio="none" style="vertical-align:0px;fill:#22a4f0;margin:0 0.25px"><use href="#sd"/></svg></div>
<div class="t" style="left:193.7px;top:352.83px;font-size:9.3px;line-height:12px;height:12px;color:#2b2b2b;">85.87%</div>
<div class="t" style="left:235.1px;top:352.83px;font-size:9.3px;line-height:12px;height:12px;color:#2b2b2b;"><span style="color:#1d6494">60.3%</span><span class="sl">/</span><span style="color:#4f8c33">39.7%</span></div>
<svg class="abs" style="left:108.8px;top:366.68px" width="7.2" height="9.2" viewBox="0 0 72 92"><path d="M7 42V30C7 12 19 1 36 1S65 12 65 30V42H50V30C50 21 44 15 36 15S22 21 22 30V42z" fill="#c6c6c6"/><rect x="0" y="36" width="72" height="56" rx="6" fill="#c6c6c6"/><rect x="32" y="52" width="8" height="20" rx="3" fill="#f4f4f4"/></svg>
<div class="t" style="left:132.6px;top:365.61px;font-size:9.3px;line-height:12px;height:12px;color:#2b2b2b;"><span class="rk">A</span><svg class="su" width="6.10" height="6.4" viewBox="8 4 84 92" preserveAspectRatio="none" style="vertical-align:0px;fill:#333;margin:0 0.15px"><use href="#ss"/></svg><span class="rk">K</span><svg class="su" width="5.90" height="6.4" viewBox="8 4 84 92" preserveAspectRatio="none" style="vertical-align:0px;fill:#22a4f0;margin:0 0.25px"><use href="#sd"/></svg></div>
<div class="t" style="left:193.7px;top:365.61px;font-size:9.3px;line-height:12px;height:12px;color:#2b2b2b;">85.87%</div>
<div class="t" style="left:235.1px;top:365.61px;font-size:9.3px;line-height:12px;height:12px;color:#2b2b2b;"><span style="color:#1d6494">60.3%</span><span class="sl">/</span><span style="color:#4f8c33">39.7%</span></div>
<svg class="abs" style="left:108.8px;top:379.46px" width="7.2" height="9.2" viewBox="0 0 72 92"><path d="M7 42V30C7 12 19 1 36 1S65 12 65 30V42H50V30C50 21 44 15 36 15S22 21 22 30V42z" fill="#c6c6c6"/><rect x="0" y="36" width="72" height="56" rx="6" fill="#c6c6c6"/><rect x="32" y="52" width="8" height="20" rx="3" fill="#f4f4f4"/></svg>
<div class="t" style="left:132.6px;top:378.39px;font-size:9.3px;line-height:12px;height:12px;color:#2b2b2b;"><span class="rk">A</span><svg class="su" width="6.10" height="6.4" viewBox="8 4 84 92" preserveAspectRatio="none" style="vertical-align:0px;fill:#333;margin:0 0.15px"><use href="#ss"/></svg><span class="rk">A</span><svg class="su" width="5.90" height="6.4" viewBox="8 4 84 92" preserveAspectRatio="none" style="vertical-align:0px;fill:#22a4f0;margin:0 0.25px"><use href="#sd"/></svg></div>
<div class="t" style="left:193.7px;top:378.39px;font-size:9.3px;line-height:12px;height:12px;color:#2b2b2b;">85.70%</div>
<div class="t" style="left:235.1px;top:378.39px;font-size:9.3px;line-height:12px;height:12px;color:#2b2b2b;"><span style="color:#1d6494">100%</span><span class="sl">/</span><span style="color:#4f8c33">0%</span></div>
<svg class="abs" style="left:108.8px;top:392.24px" width="7.2" height="9.2" viewBox="0 0 72 92"><path d="M7 42V30C7 12 19 1 36 1S65 12 65 30V42H50V30C50 21 44 15 36 15S22 21 22 30V42z" fill="#c6c6c6"/><rect x="0" y="36" width="72" height="56" rx="6" fill="#c6c6c6"/><rect x="32" y="52" width="8" height="20" rx="3" fill="#f4f4f4"/></svg>
<div class="t" style="left:132.6px;top:391.17px;font-size:9.3px;line-height:12px;height:12px;color:#2b2b2b;"><span class="rk">A</span><svg class="su" width="5.90" height="6.4" viewBox="8 4 84 92" preserveAspectRatio="none" style="vertical-align:0px;fill:#22a4f0;margin:0 0.25px"><use href="#sd"/></svg><span class="rk">A</span><svg class="su" width="6.90" height="6.4" viewBox="8 4 84 92" preserveAspectRatio="none" style="vertical-align:0px;fill:#149a22;margin:0 -0.25px"><use href="#sc"/></svg></div>
<div class="t" style="left:193.7px;top:391.17px;font-size:9.3px;line-height:12px;height:12px;color:#2b2b2b;">85.70%</div>
<div class="t" style="left:235.1px;top:391.17px;font-size:9.3px;line-height:12px;height:12px;color:#2b2b2b;"><span style="color:#1d6494">100%</span><span class="sl">/</span><span style="color:#4f8c33">0%</span></div>
<svg class="abs" style="left:108.8px;top:405.02px" width="7.2" height="9.2" viewBox="0 0 72 92"><path d="M7 42V30C7 12 19 1 36 1S65 12 65 30V42H50V30C50 21 44 15 36 15S22 21 22 30V42z" fill="#c6c6c6"/><rect x="0" y="36" width="72" height="56" rx="6" fill="#c6c6c6"/><rect x="32" y="52" width="8" height="20" rx="3" fill="#f4f4f4"/></svg>
<div class="t" style="left:132.6px;top:403.95px;font-size:9.3px;line-height:12px;height:12px;color:#2b2b2b;"><span class="rk">A</span><svg class="su" width="6.50" height="6.4" viewBox="8 4 84 92" preserveAspectRatio="none" style="vertical-align:0px;fill:#f00d0d;margin:0 -0.05px"><use href="#sh"/></svg><span class="rk">K</span><svg class="su" width="5.90" height="6.4" viewBox="8 4 84 92" preserveAspectRatio="none" style="vertical-align:0px;fill:#22a4f0;margin:0 0.25px"><use href="#sd"/></svg></div>
<div class="t" style="left:193.7px;top:403.95px;font-size:9.3px;line-height:12px;height:12px;color:#2b2b2b;">85.66%</div>
<div class="t" style="left:235.1px;top:403.95px;font-size:9.3px;line-height:12px;height:12px;color:#2b2b2b;"><span style="color:#1d6494">64.8%</span><span class="sl">/</span><span style="color:#4f8c33">35.2%</span></div>
<svg class="abs" style="left:108.8px;top:417.80px" width="7.2" height="9.2" viewBox="0 0 72 92"><path d="M7 42V30C7 12 19 1 36 1S65 12 65 30V42H50V30C50 21 44 15 36 15S22 21 22 30V42z" fill="#c6c6c6"/><rect x="0" y="36" width="72" height="56" rx="6" fill="#c6c6c6"/><rect x="32" y="52" width="8" height="20" rx="3" fill="#f4f4f4"/></svg>
<div class="t" style="left:132.6px;top:416.73px;font-size:9.3px;line-height:12px;height:12px;color:#2b2b2b;"><span class="rk">A</span><svg class="su" width="5.90" height="6.4" viewBox="8 4 84 92" preserveAspectRatio="none" style="vertical-align:0px;fill:#22a4f0;margin:0 0.25px"><use href="#sd"/></svg><span class="rk">A</span><svg class="su" width="6.50" height="6.4" viewBox="8 4 84 92" preserveAspectRatio="none" style="vertical-align:0px;fill:#f00d0d;margin:0 -0.05px"><use href="#sh"/></svg></div>
<div class="t" style="left:193.7px;top:416.73px;font-size:9.3px;line-height:12px;height:12px;color:#2b2b2b;">85.39%</div>
<div class="t" style="left:235.1px;top:416.73px;font-size:9.3px;line-height:12px;height:12px;color:#2b2b2b;"><span style="color:#1d6494">100%</span><span class="sl">/</span><span style="color:#4f8c33">0%</span></div>
<svg class="abs" style="left:108.8px;top:430.58px" width="7.2" height="9.2" viewBox="0 0 72 92"><path d="M7 42V30C7 12 19 1 36 1S65 12 65 30V42H50V30C50 21 44 15 36 15S22 21 22 30V42z" fill="#c6c6c6"/><rect x="0" y="36" width="72" height="56" rx="6" fill="#c6c6c6"/><rect x="32" y="52" width="8" height="20" rx="3" fill="#f4f4f4"/></svg>
<div class="t" style="left:132.6px;top:429.51px;font-size:9.3px;line-height:12px;height:12px;color:#2b2b2b;"><span class="rk">A</span><svg class="su" width="6.10" height="6.4" viewBox="8 4 84 92" preserveAspectRatio="none" style="vertical-align:0px;fill:#333;margin:0 0.15px"><use href="#ss"/></svg><span class="rk">K</span><svg class="su" width="6.10" height="6.4" viewBox="8 4 84 92" preserveAspectRatio="none" style="vertical-align:0px;fill:#333;margin:0 0.15px"><use href="#ss"/></svg></div>
<div class="t" style="left:193.7px;top:429.51px;font-size:9.3px;line-height:12px;height:12px;color:#2b2b2b;">85.30%</div>
<div class="t" style="left:235.1px;top:429.51px;font-size:9.3px;line-height:12px;height:12px;color:#2b2b2b;"><span style="color:#1d6494">66.5%</span><span class="sl">/</span><span style="color:#4f8c33">33.5%</span></div>
<svg class="abs" style="left:108.8px;top:443.36px" width="7.2" height="9.2" viewBox="0 0 72 92"><path d="M7 42V30C7 12 19 1 36 1S65 12 65 30V42H50V30C50 21 44 15 36 15S22 21 22 30V42z" fill="#c6c6c6"/><rect x="0" y="36" width="72" height="56" rx="6" fill="#c6c6c6"/><rect x="32" y="52" width="8" height="20" rx="3" fill="#f4f4f4"/></svg>
<div class="t" style="left:132.6px;top:442.29px;font-size:9.3px;line-height:12px;height:12px;color:#2b2b2b;"><span class="rk">A</span><svg class="su" width="6.90" height="6.4" viewBox="8 4 84 92" preserveAspectRatio="none" style="vertical-align:0px;fill:#149a22;margin:0 -0.25px"><use href="#sc"/></svg><span class="rk">K</span><svg class="su" width="6.90" height="6.4" viewBox="8 4 84 92" preserveAspectRatio="none" style="vertical-align:0px;fill:#149a22;margin:0 -0.25px"><use href="#sc"/></svg></div>
<div class="t" style="left:193.7px;top:442.29px;font-size:9.3px;line-height:12px;height:12px;color:#2b2b2b;">85.30%</div>
<div class="t" style="left:235.1px;top:442.29px;font-size:9.3px;line-height:12px;height:12px;color:#2b2b2b;"><span style="color:#1d6494">66.5%</span><span class="sl">/</span><span style="color:#4f8c33">33.5%</span></div>
<div class="abs" style="left:428px;top:160.5px;width:11.2px;height:293.5px;background:#ebebeb"></div>
<div class="abs" style="left:428px;top:160.5px;width:11.2px;height:32.5px;background:#cdcdcd"></div>
<div class="abs" style="left:117.3px;top:457.3px;width:321.3px;height:72.7px;border:1px solid #dcdcdc;box-sizing:border-box;background:#fff"></div>
<div class="t" style="left:125px;top:461.69px;font-size:9.25px;line-height:12px;height:12px;color:#2b2b2b;"><span class="cj">底池</span>: 33.2</div>
<div class="t" style="left:125px;top:474.29px;font-size:9.25px;line-height:12px;height:12px;color:#2b2b2b;"><span class="cj">筹码</span>: 83.4</div>
<div class="t" style="left:125px;top:486.89px;font-size:9.25px;line-height:12px;height:12px;color:#2b2b2b;"><span class="cj">进行跟注</span>: 0</div>
<div class="t" style="left:125px;top:499.49px;font-size:9.25px;line-height:12px;height:12px;color:#2b2b2b;"><span class="cj">赔率</span>: NA</div>
<div class="t" style="left:160px;top:461.69px;font-size:9.25px;line-height:12px;height:12px;color:#2b2b2b;width:72px;text-align:right;"><span class="cj">组合</span>:</div>
<div class="t" style="left:160px;top:474.29px;font-size:9.25px;line-height:12px;height:12px;color:#2b2b2b;width:72px;text-align:right;"><span class="cj">比例</span>:</div>
<div class="t" style="left:160px;top:486.89px;font-size:9.25px;line-height:12px;height:12px;color:#2b2b2b;width:72px;text-align:right;"><span class="cj">赢率</span>:</div>
<div class="t" style="left:160px;top:499.49px;font-size:9.25px;line-height:12px;height:12px;color:#2b2b2b;width:72px;text-align:right;">EV:</div>
<div class="t" style="left:235.5px;top:461.69px;font-size:9.25px;line-height:12px;height:12px;color:#2b2b2b;">160.1 (<span style="color:#1d6494">85.52</span><span class="sl">/</span><span style="color:#4f8c33">74.61</span>)</div>
<div class="t" style="left:235.5px;top:474.29px;font-size:9.25px;line-height:12px;height:12px;color:#2b2b2b;"><span style="color:#1d6494">53.4%</span><span class="sl">/</span><span style="color:#4f8c33">46.6%</span></div>
<div class="t" style="left:235.5px;top:486.89px;font-size:9.25px;line-height:12px;height:12px;color:#2b2b2b;">52.71% (<span style="color:#1d6494">57.6%</span><span class="sl">/</span><span style="color:#4f8c33">47.2%</span>)</div>
<div class="t" style="left:235.5px;top:499.49px;font-size:9.25px;line-height:12px;height:12px;color:#2b2b2b;">17.695 (<span style="color:#1d6494">21.5432</span><span class="sl">/</span><span style="color:#4f8c33">13.3178</span>)</div>
<div class="t" style="left:233.5px;top:514.99px;font-size:9.25px;line-height:12px;height:12px;color:#2b2b2b;">204 <span class="cj">牌桌中的独特项</span></div>
<svg class="abs" style="left:390px;top:458px" width="50" height="17" viewBox="390 458 50 17"><rect x="392.85" y="460.85" width="11.3" height="11.2" fill="#fff" stroke="#0c7fcb" stroke-width="1.3"/><path d="M395.7,464.7H401.5M398.6,464.7V470.3" stroke="#0c7fcb" stroke-width="1" fill="none"/><path d="M412.6,460.85H408.95V472.05H420.1V467" stroke="#0c7fcb" stroke-width="1.3" fill="none"/><path d="M413.7,467.4L419.9,461.2M414.6,460.85H420.1V465.6" stroke="#0c7fcb" stroke-width="1.3" fill="none"/><rect x="424.9" y="469" width="3.2" height="3.7" rx="0.5" fill="#0c7fcb"/><rect x="429.2" y="465" width="3.4" height="7.7" rx="0.7" fill="#0c7fcb"/><rect x="433.7" y="460.5" width="3.2" height="12.2" rx="0.7" fill="#0c7fcb"/></svg>
<div class="t btn" style="left:189.6px;top:537px;width:177.3px;height:21px;line-height:23.2px;background:#0c7fcb;color:#fff;border-radius:2px"><span class="cj" style="color:#fff">分析模式（无编辑）</span></div>
<div class="t btn" style="left:189.6px;top:561.6px;width:177.3px;height:20.6px;line-height:22.8px;background:#c8c8c8;color:#f2f2f2;border-radius:2px"><span class="cj" style="color:#f2f2f2">锁定</span>+<span class="cj" style="color:#f2f2f2">编辑决策</span></div>
<svg class="abs" style="left:547px;top:106px" width="22.8" height="16" viewBox="547 106 22.8 16"><rect x="548.5" y="107.8" width="19.8" height="12.6" fill="#fff" stroke="#a6a6a6" stroke-width="1"/></svg><div class="t" style="left:551.8px;top:108.58px;font-size:9.3px;line-height:12px;height:12px;color:#2b2b2b;"><span class="rk" style="width:6.8px">K</span><svg class="su" width="6.50" height="6.4" viewBox="8 4 84 92" preserveAspectRatio="none" style="vertical-align:0px;fill:#f00d0d;margin:0 -0.05px"><use href="#sh"/></svg></div>
<svg class="abs" style="left:569px;top:106px" width="22.5" height="16" viewBox="569 106 22.5 16"><rect x="570.5" y="107.8" width="19.5" height="12.6" fill="#fff" stroke="#a6a6a6" stroke-width="1"/></svg><div class="t" style="left:573.8px;top:108.58px;font-size:9.3px;line-height:12px;height:12px;color:#2b2b2b;"><span class="rk" style="width:6.8px">9</span><svg class="su" width="5.90" height="6.4" viewBox="8 4 84 92" preserveAspectRatio="none" style="vertical-align:0px;fill:#22a4f0;margin:0 0.25px"><use href="#sd"/></svg></div>
<svg class="abs" style="left:590.5px;top:106px" width="22.5" height="16" viewBox="590.5 106 22.5 16"><rect x="592" y="107.8" width="19.5" height="12.6" fill="#fff" stroke="#a6a6a6" stroke-width="1"/></svg><div class="t" style="left:595.3px;top:108.58px;font-size:9.3px;line-height:12px;height:12px;color:#2b2b2b;"><span class="rk" style="width:6.8px">5</span><svg class="su" width="5.90" height="6.4" viewBox="8 4 84 92" preserveAspectRatio="none" style="vertical-align:0px;fill:#22a4f0;margin:0 0.25px"><use href="#sd"/></svg></div>
<svg class="abs" style="left:616px;top:106px" width="21.8" height="16" viewBox="616 106 21.8 16"><rect x="617.5" y="107.8" width="18.8" height="12.6" fill="#fff" stroke="#a6a6a6" stroke-width="1"/></svg><div class="t" style="left:620.8px;top:108.58px;font-size:9.3px;line-height:12px;height:12px;color:#2b2b2b;"><span class="rk" style="width:6.8px">2</span><svg class="su" width="6.10" height="6.4" viewBox="8 4 84 92" preserveAspectRatio="none" style="vertical-align:0px;fill:#333;margin:0 0.15px"><use href="#ss"/></svg></div>
<div class="abs" style="left:446.9px;top:148px;width:23px;height:11.3px;border-radius:6px;background:#0c7fcb"></div><div class="abs" style="left:447.8px;top:148.85px;width:9.6px;height:9.6px;border-radius:5px;background:#fff"></div>
<div class="t" style="left:474px;top:148.58px;font-size:9.3px;line-height:12px;height:12px;color:#333;"><span class="cj" style="color:#383838">显示方式</span>1</div>
<div class="abs" style="left:582px;top:148px;width:23px;height:11.3px;border-radius:6px;background:#adadad"></div><div class="abs" style="left:582.9px;top:148.85px;width:9.6px;height:9.6px;border-radius:5px;background:#fff"></div>
<div class="t" style="left:609px;top:148.58px;font-size:9.3px;line-height:12px;height:12px;color:#333;"><span class="cj" style="color:#383838">标准化</span> (F8)</div>
<svg class="abs" style="left:440px;top:155px" width="310" height="305" viewBox="440 155 310 305"><path d="M447.10,176.66V161.95a1.6,1.6 0 0 1 1.6,-1.6h18.59a1.6,1.6 0 0 1 1.6,1.6V176.66z" fill="#0c7fcb"/><path d="M447.10,176.66V180.50a1.6,1.6 0 0 0 1.6,1.6h18.59a1.6,1.6 0 0 0 1.6,-1.6V176.66z" fill="#73bb44"/><path d="M469.74,177.10V161.95a1.6,1.6 0 0 1 1.6,-1.6h18.59a1.6,1.6 0 0 1 1.6,1.6V177.10z" fill="#0c7fcb"/><path d="M469.74,177.10V180.50a1.6,1.6 0 0 0 1.6,1.6h18.59a1.6,1.6 0 0 0 1.6,-1.6V177.10z" fill="#73bb44"/><path d="M492.37,164.70V161.95a1.6,1.6 0 0 1 1.6,-1.6h18.59a1.6,1.6 0 0 1 1.6,1.6V164.70z" fill="#0c7fcb"/><path d="M492.37,164.70V180.50a1.6,1.6 0 0 0 1.6,1.6h18.59a1.6,1.6 0 0 0 1.6,-1.6V164.70z" fill="#73bb44"/><path d="M515.00,170.36V161.95a1.6,1.6 0 0 1 1.6,-1.6h18.59a1.6,1.6 0 0 1 1.6,1.6V170.36z" fill="#0c7fcb"/><path d="M515.00,170.36V180.50a1.6,1.6 0 0 0 1.6,1.6h18.59a1.6,1.6 0 0 0 1.6,-1.6V170.36z" fill="#73bb44"/><path d="M537.64,166.44V161.95a1.6,1.6 0 0 1 1.6,-1.6h18.59a1.6,1.6 0 0 1 1.6,1.6V166.44z" fill="#0c7fcb"/><path d="M537.64,166.44V180.50a1.6,1.6 0 0 0 1.6,1.6h18.59a1.6,1.6 0 0 0 1.6,-1.6V166.44z" fill="#73bb44"/><path d="M560.27,162.53V161.95a1.6,1.6 0 0 1 1.6,-1.6h18.59a1.6,1.6 0 0 1 1.6,1.6V162.53z" fill="#0c7fcb"/><path d="M560.27,162.53V180.50a1.6,1.6 0 0 0 1.6,1.6h18.59a1.6,1.6 0 0 0 1.6,-1.6V162.53z" fill="#73bb44"/><path d="M582.91,167.53V161.95a1.6,1.6 0 0 1 1.6,-1.6h18.59a1.6,1.6 0 0 1 1.6,1.6V167.53z" fill="#0a6cad"/><path d="M582.91,167.53V180.50a1.6,1.6 0 0 0 1.6,1.6h18.59a1.6,1.6 0 0 0 1.6,-1.6V167.53z" fill="#629f3a"/><path d="M605.55,167.53V161.95a1.6,1.6 0 0 1 1.6,-1.6h18.59a1.6,1.6 0 0 1 1.6,1.6V167.53z" fill="#08568a"/><path d="M605.55,167.53V180.50a1.6,1.6 0 0 0 1.6,1.6h18.59a1.6,1.6 0 0 0 1.6,-1.6V167.53z" fill="#4e7f2e"/><rect x="628.18" y="160.35" width="21.79" height="21.75" rx="1.6" fill="#000"/><path d="M650.82,180.50V161.95a1.6,1.6 0 0 1 1.6,-1.6h18.59a1.6,1.6 0 0 1 1.6,1.6V180.50z" fill="#0c7fcb"/><path d="M650.82,180.50V180.50a1.6,1.6 0 0 0 1.6,1.6h18.59a1.6,1.6 0 0 0 1.6,-1.6V180.50z" fill="#73bb44"/><path d="M673.45,180.50V161.95a1.6,1.6 0 0 1 1.6,-1.6h18.59a1.6,1.6 0 0 1 1.6,1.6V180.50z" fill="#0b76bd"/><path d="M673.45,180.50V180.50a1.6,1.6 0 0 0 1.6,1.6h18.59a1.6,1.6 0 0 0 1.6,-1.6V180.50z" fill="#6bae3f"/><rect x="696.09" y="160.35" width="21.79" height="21.75" rx="1.6" fill="#095f98"/><rect x="718.72" y="160.35" width="21.79" height="21.75" rx="1.6" fill="#000"/><path d="M447.10,198.83V184.55a1.6,1.6 0 0 1 1.6,-1.6h18.59a1.6,1.6 0 0 1 1.6,1.6V198.83z" fill="#0c7fcb"/><path d="M447.10,198.83V203.10a1.6,1.6 0 0 0 1.6,1.6h18.59a1.6,1.6 0 0 0 1.6,-1.6V198.83z" fill="#73bb44"/><path d="M469.74,197.52V184.55a1.6,1.6 0 0 1 1.6,-1.6h18.59a1.6,1.6 0 0 1 1.6,1.6V197.52z" fill="#0c7fcb"/><path d="M469.74,197.52V203.10a1.6,1.6 0 0 0 1.6,1.6h18.59a1.6,1.6 0 0 0 1.6,-1.6V197.52z" fill="#73bb44"/><path d="M492.37,203.10V184.55a1.6,1.6 0 0 1 1.6,-1.6h18.59a1.6,1.6 0 0 1 1.6,1.6V203.10z" fill="#0c7fcb"/><path d="M492.37,203.10V203.10a1.6,1.6 0 0 0 1.6,1.6h18.59a1.6,1.6 0 0 0 1.6,-1.6V203.10z" fill="#73bb44"/><path d="M515.00,203.10V184.55a1.6,1.6 0 0 1 1.6,-1.6h18.59a1.6,1.6 0 0 1 1.6,1.6V203.10z" fill="#0c7fcb"/><path d="M515.00,203.10V203.10a1.6,1.6 0 0 0 1.6,1.6h18.59a1.6,1.6 0 0 0 1.6,-1.6V203.10z" fill="#73bb44"/><path d="M537.64,202.53V184.55a1.6,1.6 0 0 1 1.6,-1.6h18.59a1.6,1.6 0 0 1 1.6,1.6V202.53z" fill="#0c7fcb"/><path d="M537.64,202.53V203.10a1.6,1.6 0 0 0 1.6,1.6h18.59a1.6,1.6 0 0 0 1.6,-1.6V202.53z" fill="#73bb44"/><rect x="560.27" y="182.95" width="21.79" height="21.75" rx="1.6" fill="#0c7fcb"/><rect x="582.91" y="182.95" width="21.79" height="21.75" rx="1.6" fill="#000"/><rect x="605.55" y="182.95" width="21.79" height="21.75" rx="1.6" fill="#000"/><rect x="628.18" y="182.95" width="21.79" height="21.75" rx="1.6" fill="#000"/><rect x="650.82" y="182.95" width="21.79" height="21.75" rx="1.6" fill="#000"/><rect x="673.45" y="182.95" width="21.79" height="21.75" rx="1.6" fill="#000"/><rect x="696.09" y="182.95" width="21.79" height="21.75" rx="1.6" fill="#000"/><rect x="718.72" y="182.95" width="21.79" height="21.75" rx="1.6" fill="#000"/><path d="M447.10,213.81V207.15a1.6,1.6 0 0 1 1.6,-1.6h18.59a1.6,1.6 0 0 1 1.6,1.6V213.81z" fill="#0c7fcb"/><path d="M447.10,213.81V225.70a1.6,1.6 0 0 0 1.6,1.6h18.59a1.6,1.6 0 0 0 1.6,-1.6V213.81z" fill="#73bb44"/><rect x="469.74" y="205.55" width="21.79" height="21.75" rx="1.6" fill="#09619a"/><path d="M492.37,220.99V207.15a1.6,1.6 0 0 1 1.6,-1.6h18.59a1.6,1.6 0 0 1 1.6,1.6V220.99z" fill="#0c7fcb"/><path d="M492.37,220.99V225.70a1.6,1.6 0 0 0 1.6,1.6h18.59a1.6,1.6 0 0 0 1.6,-1.6V220.99z" fill="#73bb44"/><path d="M515.00,225.70V207.15a1.6,1.6 0 0 1 1.6,-1.6h18.59a1.6,1.6 0 0 1 1.6,1.6V225.70z" fill="#0c7fcb"/><path d="M515.00,225.70V225.70a1.6,1.6 0 0 0 1.6,1.6h18.59a1.6,1.6 0 0 0 1.6,-1.6V225.70z" fill="#73bb44"/><path d="M537.64,225.70V207.15a1.6,1.6 0 0 1 1.6,-1.6h18.59a1.6,1.6 0 0 1 1.6,1.6V225.70z" fill="#0c7fcb"/><path d="M537.64,225.70V225.70a1.6,1.6 0 0 0 1.6,1.6h18.59a1.6,1.6 0 0 0 1.6,-1.6V225.70z" fill="#73bb44"/><path d="M560.27,212.08V207.15a1.6,1.6 0 0 1 1.6,-1.6h18.59a1.6,1.6 0 0 1 1.6,1.6V212.08z" fill="#0c7fcb"/><path d="M560.27,212.08V225.70a1.6,1.6 0 0 0 1.6,1.6h18.59a1.6,1.6 0 0 0 1.6,-1.6V212.08z" fill="#73bb44"/><rect x="582.91" y="205.55" width="21.79" height="21.75" rx="1.6" fill="#000"/><rect x="605.55" y="205.55" width="21.79" height="21.75" rx="1.6" fill="#000"/><rect x="628.18" y="205.55" width="21.79" height="21.75" rx="1.6" fill="#000"/><rect x="650.82" y="205.55" width="21.79" height="21.75" rx="1.6" fill="#000"/><rect x="673.45" y="205.55" width="21.79" height="21.75" rx="1.6" fill="#000"/><rect x="696.09" y="205.55" width="21.79" height="21.75" rx="1.6" fill="#000"/><rect x="718.72" y="205.55" width="21.79" height="21.75" rx="1.6" fill="#000"/><path d="M447.10,239.90V229.75a1.6,1.6 0 0 1 1.6,-1.6h18.59a1.6,1.6 0 0 1 1.6,1.6V239.90z" fill="#095e96"/><path d="M447.10,239.90V248.30a1.6,1.6 0 0 0 1.6,1.6h18.59a1.6,1.6 0 0 0 1.6,-1.6V239.90z" fill="#558a32"/><rect x="469.74" y="228.15" width="21.79" height="21.75" rx="1.6" fill="#0a66a2"/><rect x="492.37" y="228.15" width="21.79" height="21.75" rx="1.6" fill="#000"/><path d="M515.00,242.94V229.75a1.6,1.6 0 0 1 1.6,-1.6h18.59a1.6,1.6 0 0 1 1.6,1.6V242.94z" fill="#0c7fcb"/><path d="M515.00,242.94V248.30a1.6,1.6 0 0 0 1.6,1.6h18.59a1.6,1.6 0 0 0 1.6,-1.6V242.94z" fill="#73bb44"/><path d="M537.64,241.42V229.75a1.6,1.6 0 0 1 1.6,-1.6h18.59a1.6,1.6 0 0 1 1.6,1.6V241.42z" fill="#0c7fcb"/><path d="M537.64,241.42V248.30a1.6,1.6 0 0 0 1.6,1.6h18.59a1.6,1.6 0 0 0 1.6,-1.6V241.42z" fill="#73bb44"/><path d="M560.27,235.55V229.75a1.6,1.6 0 0 1 1.6,-1.6h18.59a1.6,1.6 0 0 1 1.6,1.6V235.55z" fill="#0c7fcb"/><path d="M560.27,235.55V248.30a1.6,1.6 0 0 0 1.6,1.6h18.59a1.6,1.6 0 0 0 1.6,-1.6V235.55z" fill="#73bb44"/><rect x="582.91" y="228.15" width="21.79" height="21.75" rx="1.6" fill="#000"/><rect x="605.55" y="228.15" width="21.79" height="21.75" rx="1.6" fill="#000"/><rect x="628.18" y="228.15" width="21.79" height="21.75" rx="1.6" fill="#000"/><rect x="650.82" y="228.15" width="21.79" height="21.75" rx="1.6" fill="#000"/><rect x="673.45" y="228.15" width="21.79" height="21.75" rx="1.6" fill="#000"/><rect x="696.09" y="228.15" width="21.79" height="21.75" rx="1.6" fill="#000"/><rect x="718.72" y="228.15" width="21.79" height="21.75" rx="1.6" fill="#000"/><path d="M447.10,257.71V252.35a1.6,1.6 0 0 1 1.6,-1.6h18.59a1.6,1.6 0 0 1 1.6,1.6V257.71z" fill="#095e96"/><path d="M447.10,257.71V270.90a1.6,1.6 0 0 0 1.6,1.6h18.59a1.6,1.6 0 0 0 1.6,-1.6V257.71z" fill="#558a32"/><rect x="469.74" y="250.75" width="21.79" height="21.75" rx="1.6" fill="#000"/><rect x="492.37" y="250.75" width="21.79" height="21.75" rx="1.6" fill="#000"/><rect x="515.00" y="250.75" width="21.79" height="21.75" rx="1.6" fill="#000"/><path d="M537.64,265.98V252.35a1.6,1.6 0 0 1 1.6,-1.6h18.59a1.6,1.6 0 0 1 1.6,1.6V265.98z" fill="#0c7fcb"/><path d="M537.64,265.98V270.90a1.6,1.6 0 0 0 1.6,1.6h18.59a1.6,1.6 0 0 0 1.6,-1.6V265.98z" fill="#73bb44"/><path d="M560.27,252.35V252.35a1.6,1.6 0 0 1 1.6,-1.6h18.59a1.6,1.6 0 0 1 1.6,1.6V252.35z" fill="#0c7fcb"/><path d="M560.27,252.35V270.90a1.6,1.6 0 0 0 1.6,1.6h18.59a1.6,1.6 0 0 0 1.6,-1.6V252.35z" fill="#73bb44"/><path d="M582.91,255.97V252.35a1.6,1.6 0 0 1 1.6,-1.6h18.59a1.6,1.6 0 0 1 1.6,1.6V255.97z" fill="#095e96"/><path d="M582.91,255.97V270.90a1.6,1.6 0 0 0 1.6,1.6h18.59a1.6,1.6 0 0 0 1.6,-1.6V255.97z" fill="#558a32"/><rect x="605.55" y="250.75" width="21.79" height="21.75" rx="1.6" fill="#000"/><rect x="628.18" y="250.75" width="21.79" height="21.75" rx="1.6" fill="#000"/><rect x="650.82" y="250.75" width="21.79" height="21.75" rx="1.6" fill="#000"/><rect x="673.45" y="250.75" width="21.79" height="21.75" rx="1.6" fill="#000"/><rect x="696.09" y="250.75" width="21.79" height="21.75" rx="1.6" fill="#000"/><rect x="718.72" y="250.75" width="21.79" height="21.75" rx="1.6" fill="#000"/><rect x="447.10" y="273.35" width="21.79" height="21.75" rx="1.6" fill="#000"/><rect x="469.74" y="273.35" width="21.79" height="21.75" rx="1.6" fill="#000"/><rect x="492.37" y="273.35" width="21.79" height="21.75" rx="1.6" fill="#000"/><rect x="515.00" y="273.35" width="21.79" height="21.75" rx="1.6" fill="#000"/><rect x="537.64" y="273.35" width="21.79" height="21.75" rx="1.6" fill="#000"/><rect x="560.27" y="273.35" width="21.79" height="21.75" rx="1.6" fill="#73bb44"/><rect x="582.91" y="273.35" width="21.79" height="21.75" rx="1.6" fill="#73bb44"/><rect x="605.55" y="273.35" width="21.79" height="21.75" rx="1.6" fill="#000"/><rect x="628.18" y="273.35" width="21.79" height="21.75" rx="1.6" fill="#000"/><rect x="650.82" y="273.35" width="21.79" height="21.75" rx="1.6" fill="#000"/><rect x="673.45" y="273.35" width="21.79" height="21.75" rx="1.6" fill="#000"/><rect x="696.09" y="273.35" width="21.79" height="21.75" rx="1.6" fill="#000"/><rect x="718.72" y="273.35" width="21.79" height="21.75" rx="1.6" fill="#000"/><rect x="447.10" y="295.95" width="21.79" height="21.75" rx="1.6" fill="#000"/><rect x="469.74" y="295.95" width="21.79" height="21.75" rx="1.6" fill="#000"/><rect x="492.37" y="295.95" width="21.79" height="21.75" rx="1.6" fill="#000"/><rect x="515.00" y="295.95" width="21.79" height="21.75" rx="1.6" fill="#000"/><rect x="537.64" y="295.95" width="21.79" height="21.75" rx="1.6" fill="#000"/><rect x="560.27" y="295.95" width="21.79" height="21.75" rx="1.6" fill="#000"/><rect x="582.91" y="295.95" width="21.79" height="21.75" rx="1.6" fill="#73bb44"/><path d="M605.55,302.26V297.55a1.6,1.6 0 0 1 1.6,-1.6h18.59a1.6,1.6 0 0 1 1.6,1.6V302.26z" fill="#0c7fcb"/><path d="M605.55,302.26V316.10a1.6,1.6 0 0 0 1.6,1.6h18.59a1.6,1.6 0 0 0 1.6,-1.6V302.26z" fill="#73bb44"/><rect x="628.18" y="295.95" width="21.79" height="21.75" rx="1.6" fill="#000"/><rect x="650.82" y="295.95" width="21.79" height="21.75" rx="1.6" fill="#000"/><rect x="673.45" y="295.95" width="21.79" height="21.75" rx="1.6" fill="#000"/><rect x="696.09" y="295.95" width="21.79" height="21.75" rx="1.6" fill="#000"/><rect x="718.72" y="295.95" width="21.79" height="21.75" rx="1.6" fill="#000"/><rect x="447.10" y="318.55" width="21.79" height="21.75" rx="1.6" fill="#000"/><rect x="469.74" y="318.55" width="21.79" height="21.75" rx="1.6" fill="#000"/><rect x="492.37" y="318.55" width="21.79" height="21.75" rx="1.6" fill="#000"/><rect x="515.00" y="318.55" width="21.79" height="21.75" rx="1.6" fill="#000"/><rect x="537.64" y="318.55" width="21.79" height="21.75" rx="1.6" fill="#000"/><rect x="560.27" y="318.55" width="21.79" height="21.75" rx="1.6" fill="#000"/><rect x="582.91" y="318.55" width="21.79" height="21.75" rx="1.6" fill="#000"/><rect x="605.55" y="318.55" width="21.79" height="21.75" rx="1.6" fill="#73bb44"/><path d="M628.18,332.25V320.15a1.6,1.6 0 0 1 1.6,-1.6h18.59a1.6,1.6 0 0 1 1.6,1.6V332.25z" fill="#0c7fcb"/><path d="M628.18,332.25V338.70a1.6,1.6 0 0 0 1.6,1.6h18.59a1.6,1.6 0 0 0 1.6,-1.6V332.25z" fill="#73bb44"/><rect x="650.82" y="318.55" width="21.79" height="21.75" rx="1.6" fill="#000"/><rect x="673.45" y="318.55" width="21.79" height="21.75" rx="1.6" fill="#000"/><rect x="696.09" y="318.55" width="21.79" height="21.75" rx="1.6" fill="#000"/><rect x="718.72" y="318.55" width="21.79" height="21.75" rx="1.6" fill="#000"/><rect x="447.10" y="341.15" width="21.79" height="21.75" rx="1.6" fill="#000"/><rect x="469.74" y="341.15" width="21.79" height="21.75" rx="1.6" fill="#000"/><rect x="492.37" y="341.15" width="21.79" height="21.75" rx="1.6" fill="#000"/><rect x="515.00" y="341.15" width="21.79" height="21.75" rx="1.6" fill="#000"/><rect x="537.64" y="341.15" width="21.79" height="21.75" rx="1.6" fill="#000"/><rect x="560.27" y="341.15" width="21.79" height="21.75" rx="1.6" fill="#000"/><rect x="582.91" y="341.15" width="21.79" height="21.75" rx="1.6" fill="#000"/><rect x="605.55" y="341.15" width="21.79" height="21.75" rx="1.6" fill="#000"/><path d="M628.18,351.37V342.75a1.6,1.6 0 0 1 1.6,-1.6h18.59a1.6,1.6 0 0 1 1.6,1.6V351.37z" fill="#0c7fcb"/><path d="M628.18,351.37V361.30a1.6,1.6 0 0 0 1.6,1.6h18.59a1.6,1.6 0 0 0 1.6,-1.6V351.37z" fill="#73bb44"/><path d="M650.82,348.33V342.75a1.6,1.6 0 0 1 1.6,-1.6h18.59a1.6,1.6 0 0 1 1.6,1.6V348.33z" fill="#0c7fcb"/><path d="M650.82,348.33V361.30a1.6,1.6 0 0 0 1.6,1.6h18.59a1.6,1.6 0 0 0 1.6,-1.6V348.33z" fill="#73bb44"/><rect x="673.45" y="341.15" width="21.79" height="21.75" rx="1.6" fill="#000"/><rect x="696.09" y="341.15" width="21.79" height="21.75" rx="1.6" fill="#000"/><rect x="718.72" y="341.15" width="21.79" height="21.75" rx="1.6" fill="#000"/><rect x="447.10" y="363.75" width="21.79" height="21.75" rx="1.6" fill="#000"/><rect x="469.74" y="363.75" width="21.79" height="21.75" rx="1.6" fill="#000"/><rect x="492.37" y="363.75" width="21.79" height="21.75" rx="1.6" fill="#000"/><rect x="515.00" y="363.75" width="21.79" height="21.75" rx="1.6" fill="#000"/><rect x="537.64" y="363.75" width="21.79" height="21.75" rx="1.6" fill="#000"/><rect x="560.27" y="363.75" width="21.79" height="21.75" rx="1.6" fill="#000"/><rect x="582.91" y="363.75" width="21.79" height="21.75" rx="1.6" fill="#000"/><rect x="605.55" y="363.75" width="21.79" height="21.75" rx="1.6" fill="#000"/><rect x="628.18" y="363.75" width="21.79" height="21.75" rx="1.6" fill="#000"/><path d="M650.82,368.97V365.35a1.6,1.6 0 0 1 1.6,-1.6h18.59a1.6,1.6 0 0 1 1.6,1.6V368.97z" fill="#095e96"/><path d="M650.82,368.97V383.90a1.6,1.6 0 0 0 1.6,1.6h18.59a1.6,1.6 0 0 0 1.6,-1.6V368.97z" fill="#558a32"/><path d="M673.45,370.28V365.35a1.6,1.6 0 0 1 1.6,-1.6h18.59a1.6,1.6 0 0 1 1.6,1.6V370.28z" fill="#095e96"/><path d="M673.45,370.28V383.90a1.6,1.6 0 0 0 1.6,1.6h18.59a1.6,1.6 0 0 0 1.6,-1.6V370.28z" fill="#558a32"/><rect x="696.09" y="363.75" width="21.79" height="21.75" rx="1.6" fill="#000"/><rect x="718.72" y="363.75" width="21.79" height="21.75" rx="1.6" fill="#000"/><rect x="447.10" y="386.35" width="21.79" height="21.75" rx="1.6" fill="#000"/><rect x="469.74" y="386.35" width="21.79" height="21.75" rx="1.6" fill="#000"/><rect x="492.37" y="386.35" width="21.79" height="21.75" rx="1.6" fill="#000"/><rect x="515.00" y="386.35" width="21.79" height="21.75" rx="1.6" fill="#000"/><rect x="537.64" y="386.35" width="21.79" height="21.75" rx="1.6" fill="#000"/><rect x="560.27" y="386.35" width="21.79" height="21.75" rx="1.6" fill="#000"/><rect x="582.91" y="386.35" width="21.79" height="21.75" rx="1.6" fill="#000"/><rect x="605.55" y="386.35" width="21.79" height="21.75" rx="1.6" fill="#000"/><rect x="628.18" y="386.35" width="21.79" height="21.75" rx="1.6" fill="#000"/><rect x="650.82" y="386.35" width="21.79" height="21.75" rx="1.6" fill="#000"/><rect x="673.45" y="386.35" width="21.79" height="21.75" rx="1.6" fill="#000"/><rect x="696.09" y="386.35" width="21.79" height="21.75" rx="1.6" fill="#000"/><rect x="718.72" y="386.35" width="21.79" height="21.75" rx="1.6" fill="#000"/><rect x="447.10" y="408.95" width="21.79" height="21.75" rx="1.6" fill="#000"/><rect x="469.74" y="408.95" width="21.79" height="21.75" rx="1.6" fill="#000"/><rect x="492.37" y="408.95" width="21.79" height="21.75" rx="1.6" fill="#000"/><rect x="515.00" y="408.95" width="21.79" height="21.75" rx="1.6" fill="#000"/><rect x="537.64" y="408.95" width="21.79" height="21.75" rx="1.6" fill="#000"/><rect x="560.27" y="408.95" width="21.79" height="21.75" rx="1.6" fill="#000"/><rect x="582.91" y="408.95" width="21.79" height="21.75" rx="1.6" fill="#000"/><rect x="605.55" y="408.95" width="21.79" height="21.75" rx="1.6" fill="#000"/><rect x="628.18" y="408.95" width="21.79" height="21.75" rx="1.6" fill="#000"/><rect x="650.82" y="408.95" width="21.79" height="21.75" rx="1.6" fill="#000"/><rect x="673.45" y="408.95" width="21.79" height="21.75" rx="1.6" fill="#000"/><rect x="696.09" y="408.95" width="21.79" height="21.75" rx="1.6" fill="#000"/><rect x="718.72" y="408.95" width="21.79" height="21.75" rx="1.6" fill="#000"/><rect x="447.10" y="431.55" width="21.79" height="21.75" rx="1.6" fill="#000"/><rect x="469.74" y="431.55" width="21.79" height="21.75" rx="1.6" fill="#000"/><rect x="492.37" y="431.55" width="21.79" height="21.75" rx="1.6" fill="#000"/><rect x="515.00" y="431.55" width="21.79" height="21.75" rx="1.6" fill="#000"/><rect x="537.64" y="431.55" width="21.79" height="21.75" rx="1.6" fill="#000"/><rect x="560.27" y="431.55" width="21.79" height="21.75" rx="1.6" fill="#000"/><rect x="582.91" y="431.55" width="21.79" height="21.75" rx="1.6" fill="#000"/><rect x="605.55" y="431.55" width="21.79" height="21.75" rx="1.6" fill="#000"/><rect x="628.18" y="431.55" width="21.79" height="21.75" rx="1.6" fill="#000"/><rect x="650.82" y="431.55" width="21.79" height="21.75" rx="1.6" fill="#000"/><rect x="673.45" y="431.55" width="21.79" height="21.75" rx="1.6" fill="#000"/><rect x="696.09" y="431.55" width="21.79" height="21.75" rx="1.6" fill="#000"/><rect x="718.72" y="431.55" width="21.79" height="21.75" rx="1.6" fill="#000"/></svg>
<div class="mc" style="left:447.10px;top:160.35px;width:21.79px;height:21.75px;line-height:22.45px">AA</div><div class="mc" style="left:469.74px;top:160.35px;width:21.79px;height:21.75px;line-height:22.45px">AKs</div><div class="mc" style="left:492.37px;top:160.35px;width:21.79px;height:21.75px;line-height:22.45px">AQs</div><div class="mc" style="left:515.00px;top:160.35px;width:21.79px;height:21.75px;line-height:22.45px">AJs</div><div class="mc" style="left:537.64px;top:160.35px;width:21.79px;height:21.75px;line-height:22.45px">ATs</div><div class="mc" style="left:560.27px;top:160.35px;width:21.79px;height:21.75px;line-height:22.45px">A9s</div><div class="mc" style="left:582.91px;top:160.35px;width:21.79px;height:21.75px;line-height:22.45px">A8s</div><div class="mc" style="left:605.55px;top:160.35px;width:21.79px;height:21.75px;line-height:22.45px">A7s</div><div class="mc" style="left:628.18px;top:160.35px;width:21.79px;height:21.75px;line-height:22.45px">A6s</div><div class="mc" style="left:650.82px;top:160.35px;width:21.79px;height:21.75px;line-height:22.45px">A5s</div><div class="mc" style="left:673.45px;top:160.35px;width:21.79px;height:21.75px;line-height:22.45px">A4s</div><div class="mc" style="left:696.09px;top:160.35px;width:21.79px;height:21.75px;line-height:22.45px">A3s</div><div class="mc" style="left:718.72px;top:160.35px;width:21.79px;height:21.75px;line-height:22.45px">A2s</div><div class="mc" style="left:447.10px;top:182.95px;width:21.79px;height:21.75px;line-height:22.45px">AKo</div><div class="mc" style="left:469.74px;top:182.95px;width:21.79px;height:21.75px;line-height:22.45px">KK</div><div class="mc" style="left:492.37px;top:182.95px;width:21.79px;height:21.75px;line-height:22.45px">KQs</div><div class="mc" style="left:515.00px;top:182.95px;width:21.79px;height:21.75px;line-height:22.45px">KJs</div><div class="mc" style="left:537.64px;top:182.95px;width:21.79px;height:21.75px;line-height:22.45px">KTs</div><div class="mc" style="left:560.27px;top:182.95px;width:21.79px;height:21.75px;line-height:22.45px">K9s</div><div class="mc" style="left:582.91px;top:182.95px;width:21.79px;height:21.75px;line-height:22.45px">K8s</div><div class="mc" style="left:605.55px;top:182.95px;width:21.79px;height:21.75px;line-height:22.45px">K7s</div><div class="mc" style="left:628.18px;top:182.95px;width:21.79px;height:21.75px;line-height:22.45px">K6s</div><div class="mc" style="left:650.82px;top:182.95px;width:21.79px;height:21.75px;line-height:22.45px">K5s</div><div class="mc" style="left:673.45px;top:182.95px;width:21.79px;height:21.75px;line-height:22.45px">K4s</div><div class="mc" style="left:696.09px;top:182.95px;width:21.79px;height:21.75px;line-height:22.45px">K3s</div><div class="mc" style="left:718.72px;top:182.95px;width:21.79px;height:21.75px;line-height:22.45px">K2s</div><div class="mc" style="left:447.10px;top:205.55px;width:21.79px;height:21.75px;line-height:22.45px">AQo</div><div class="mc" style="left:469.74px;top:205.55px;width:21.79px;height:21.75px;line-height:22.45px">KQo</div><div class="mc" style="left:492.37px;top:205.55px;width:21.79px;height:21.75px;line-height:22.45px">QQ</div><div class="mc" style="left:515.00px;top:205.55px;width:21.79px;height:21.75px;line-height:22.45px">QJs</div><div class="mc" style="left:537.64px;top:205.55px;width:21.79px;height:21.75px;line-height:22.45px">QTs</div><div class="mc" style="left:560.27px;top:205.55px;width:21.79px;height:21.75px;line-height:22.45px">Q9s</div><div class="mc" style="left:582.91px;top:205.55px;width:21.79px;height:21.75px;line-height:22.45px">Q8s</div><div class="mc" style="left:605.55px;top:205.55px;width:21.79px;height:21.75px;line-height:22.45px">Q7s</div><div class="mc" style="left:628.18px;top:205.55px;width:21.79px;height:21.75px;line-height:22.45px">Q6s</div><div class="mc" style="left:650.82px;top:205.55px;width:21.79px;height:21.75px;line-height:22.45px">Q5s</div><div class="mc" style="left:673.45px;top:205.55px;width:21.79px;height:21.75px;line-height:22.45px">Q4s</div><div class="mc" style="left:696.09px;top:205.55px;width:21.79px;height:21.75px;line-height:22.45px">Q3s</div><div class="mc" style="left:718.72px;top:205.55px;width:21.79px;height:21.75px;line-height:22.45px">Q2s</div><div class="mc" style="left:447.10px;top:228.15px;width:21.79px;height:21.75px;line-height:22.45px">AJo</div><div class="mc" style="left:469.74px;top:228.15px;width:21.79px;height:21.75px;line-height:22.45px">KJo</div><div class="mc" style="left:492.37px;top:228.15px;width:21.79px;height:21.75px;line-height:22.45px">QJo</div><div class="mc" style="left:515.00px;top:228.15px;width:21.79px;height:21.75px;line-height:22.45px">JJ</div><div class="mc" style="left:537.64px;top:228.15px;width:21.79px;height:21.75px;line-height:22.45px">JTs</div><div class="mc" style="left:560.27px;top:228.15px;width:21.79px;height:21.75px;line-height:22.45px">J9s</div><div class="mc" style="left:582.91px;top:228.15px;width:21.79px;height:21.75px;line-height:22.45px">J8s</div><div class="mc" style="left:605.55px;top:228.15px;width:21.79px;height:21.75px;line-height:22.45px">J7s</div><div class="mc" style="left:628.18px;top:228.15px;width:21.79px;height:21.75px;line-height:22.45px">J6s</div><div class="mc" style="left:650.82px;top:228.15px;width:21.79px;height:21.75px;line-height:22.45px">J5s</div><div class="mc" style="left:673.45px;top:228.15px;width:21.79px;height:21.75px;line-height:22.45px">J4s</div><div class="mc" style="left:696.09px;top:228.15px;width:21.79px;height:21.75px;line-height:22.45px">J3s</div><div class="mc" style="left:718.72px;top:228.15px;width:21.79px;height:21.75px;line-height:22.45px">J2s</div><div class="mc" style="left:447.10px;top:250.75px;width:21.79px;height:21.75px;line-height:22.45px">ATo</div><div class="mc" style="left:469.74px;top:250.75px;width:21.79px;height:21.75px;line-height:22.45px">KTo</div><div class="mc" style="left:492.37px;top:250.75px;width:21.79px;height:21.75px;line-height:22.45px">QTo</div><div class="mc" style="left:515.00px;top:250.75px;width:21.79px;height:21.75px;line-height:22.45px">JTo</div><div class="mc" style="left:537.64px;top:250.75px;width:21.79px;height:21.75px;line-height:22.45px">TT</div><div class="mc" style="left:560.27px;top:250.75px;width:21.79px;height:21.75px;line-height:22.45px">T9s</div><div class="mc" style="left:582.91px;top:250.75px;width:21.79px;height:21.75px;line-height:22.45px">T8s</div><div class="mc" style="left:605.55px;top:250.75px;width:21.79px;height:21.75px;line-height:22.45px">T7s</div><div class="mc" style="left:628.18px;top:250.75px;width:21.79px;height:21.75px;line-height:22.45px">T6s</div><div class="mc" style="left:650.82px;top:250.75px;width:21.79px;height:21.75px;line-height:22.45px">T5s</div><div class="mc" style="left:673.45px;top:250.75px;width:21.79px;height:21.75px;line-height:22.45px">T4s</div><div class="mc" style="left:696.09px;top:250.75px;width:21.79px;height:21.75px;line-height:22.45px">T3s</div><div class="mc" style="left:718.72px;top:250.75px;width:21.79px;height:21.75px;line-height:22.45px">T2s</div><div class="mc" style="left:447.10px;top:273.35px;width:21.79px;height:21.75px;line-height:22.45px">A9o</div><div class="mc" style="left:469.74px;top:273.35px;width:21.79px;height:21.75px;line-height:22.45px">K9o</div><div class="mc" style="left:492.37px;top:273.35px;width:21.79px;height:21.75px;line-height:22.45px">Q9o</div><div class="mc" style="left:515.00px;top:273.35px;width:21.79px;height:21.75px;line-height:22.45px">J9o</div><div class="mc" style="left:537.64px;top:273.35px;width:21.79px;height:21.75px;line-height:22.45px">T9o</div><div class="mc" style="left:560.27px;top:273.35px;width:21.79px;height:21.75px;line-height:22.45px">99</div><div class="mc" style="left:582.91px;top:273.35px;width:21.79px;height:21.75px;line-height:22.45px">98s</div><div class="mc" style="left:605.55px;top:273.35px;width:21.79px;height:21.75px;line-height:22.45px">97s</div><div class="mc" style="left:628.18px;top:273.35px;width:21.79px;height:21.75px;line-height:22.45px">96s</div><div class="mc" style="left:650.82px;top:273.35px;width:21.79px;height:21.75px;line-height:22.45px">95s</div><div class="mc" style="left:673.45px;top:273.35px;width:21.79px;height:21.75px;line-height:22.45px">94s</div><div class="mc" style="left:696.09px;top:273.35px;width:21.79px;height:21.75px;line-height:22.45px">93s</div><div class="mc" style="left:718.72px;top:273.35px;width:21.79px;height:21.75px;line-height:22.45px">92s</div><div class="mc" style="left:447.10px;top:295.95px;width:21.79px;height:21.75px;line-height:22.45px">A8o</div><div class="mc" style="left:469.74px;top:295.95px;width:21.79px;height:21.75px;line-height:22.45px">K8o</div><div class="mc" style="left:492.37px;top:295.95px;width:21.79px;height:21.75px;line-height:22.45px">Q8o</div><div class="mc" style="left:515.00px;top:295.95px;width:21.79px;height:21.75px;line-height:22.45px">J8o</div><div class="mc" style="left:537.64px;top:295.95px;width:21.79px;height:21.75px;line-height:22.45px">T8o</div><div class="mc" style="left:560.27px;top:295.95px;width:21.79px;height:21.75px;line-height:22.45px">98o</div><div class="mc" style="left:582.91px;top:295.95px;width:21.79px;height:21.75px;line-height:22.45px">88</div><div class="mc" style="left:605.55px;top:295.95px;width:21.79px;height:21.75px;line-height:22.45px">87s</div><div class="mc" style="left:628.18px;top:295.95px;width:21.79px;height:21.75px;line-height:22.45px">86s</div><div class="mc" style="left:650.82px;top:295.95px;width:21.79px;height:21.75px;line-height:22.45px">85s</div><div class="mc" style="left:673.45px;top:295.95px;width:21.79px;height:21.75px;line-height:22.45px">84s</div><div class="mc" style="left:696.09px;top:295.95px;width:21.79px;height:21.75px;line-height:22.45px">83s</div><div class="mc" style="left:718.72px;top:295.95px;width:21.79px;height:21.75px;line-height:22.45px">82s</div><div class="mc" style="left:447.10px;top:318.55px;width:21.79px;height:21.75px;line-height:22.45px">A7o</div><div class="mc" style="left:469.74px;top:318.55px;width:21.79px;height:21.75px;line-height:22.45px">K7o</div><div class="mc" style="left:492.37px;top:318.55px;width:21.79px;height:21.75px;line-height:22.45px">Q7o</div><div class="mc" style="left:515.00px;top:318.55px;width:21.79px;height:21.75px;line-height:22.45px">J7o</div><div class="mc" style="left:537.64px;top:318.55px;width:21.79px;height:21.75px;line-height:22.45px">T7o</div><div class="mc" style="left:560.27px;top:318.55px;width:21.79px;height:21.75px;line-height:22.45px">97o</div><div class="mc" style="left:582.91px;top:318.55px;width:21.79px;height:21.75px;line-height:22.45px">87o</div><div class="mc" style="left:605.55px;top:318.55px;width:21.79px;height:21.75px;line-height:22.45px">77</div><div class="mc" style="left:628.18px;top:318.55px;width:21.79px;height:21.75px;line-height:22.45px">76s</div><div class="mc" style="left:650.82px;top:318.55px;width:21.79px;height:21.75px;line-height:22.45px">75s</div><div class="mc" style="left:673.45px;top:318.55px;width:21.79px;height:21.75px;line-height:22.45px">74s</div><div class="mc" style="left:696.09px;top:318.55px;width:21.79px;height:21.75px;line-height:22.45px">73s</div><div class="mc" style="left:718.72px;top:318.55px;width:21.79px;height:21.75px;line-height:22.45px">72s</div><div class="mc" style="left:447.10px;top:341.15px;width:21.79px;height:21.75px;line-height:22.45px">A6o</div><div class="mc" style="left:469.74px;top:341.15px;width:21.79px;height:21.75px;line-height:22.45px">K6o</div><div class="mc" style="left:492.37px;top:341.15px;width:21.79px;height:21.75px;line-height:22.45px">Q6o</div><div class="mc" style="left:515.00px;top:341.15px;width:21.79px;height:21.75px;line-height:22.45px">J6o</div><div class="mc" style="left:537.64px;top:341.15px;width:21.79px;height:21.75px;line-height:22.45px">T6o</div><div class="mc" style="left:560.27px;top:341.15px;width:21.79px;height:21.75px;line-height:22.45px">96o</div><div class="mc" style="left:582.91px;top:341.15px;width:21.79px;height:21.75px;line-height:22.45px">86o</div><div class="mc" style="left:605.55px;top:341.15px;width:21.79px;height:21.75px;line-height:22.45px">76o</div><div class="mc" style="left:628.18px;top:341.15px;width:21.79px;height:21.75px;line-height:22.45px">66</div><div class="mc" style="left:650.82px;top:341.15px;width:21.79px;height:21.75px;line-height:22.45px">65s</div><div class="mc" style="left:673.45px;top:341.15px;width:21.79px;height:21.75px;line-height:22.45px">64s</div><div class="mc" style="left:696.09px;top:341.15px;width:21.79px;height:21.75px;line-height:22.45px">63s</div><div class="mc" style="left:718.72px;top:341.15px;width:21.79px;height:21.75px;line-height:22.45px">62s</div><div class="mc" style="left:447.10px;top:363.75px;width:21.79px;height:21.75px;line-height:22.45px">A5o</div><div class="mc" style="left:469.74px;top:363.75px;width:21.79px;height:21.75px;line-height:22.45px">K5o</div><div class="mc" style="left:492.37px;top:363.75px;width:21.79px;height:21.75px;line-height:22.45px">Q5o</div><div class="mc" style="left:515.00px;top:363.75px;width:21.79px;height:21.75px;line-height:22.45px">J5o</div><div class="mc" style="left:537.64px;top:363.75px;width:21.79px;height:21.75px;line-height:22.45px">T5o</div><div class="mc" style="left:560.27px;top:363.75px;width:21.79px;height:21.75px;line-height:22.45px">95o</div><div class="mc" style="left:582.91px;top:363.75px;width:21.79px;height:21.75px;line-height:22.45px">85o</div><div class="mc" style="left:605.55px;top:363.75px;width:21.79px;height:21.75px;line-height:22.45px">75o</div><div class="mc" style="left:628.18px;top:363.75px;width:21.79px;height:21.75px;line-height:22.45px">65o</div><div class="mc" style="left:650.82px;top:363.75px;width:21.79px;height:21.75px;line-height:22.45px">55</div><div class="mc" style="left:673.45px;top:363.75px;width:21.79px;height:21.75px;line-height:22.45px">54s</div><div class="mc" style="left:696.09px;top:363.75px;width:21.79px;height:21.75px;line-height:22.45px">53s</div><div class="mc" style="left:718.72px;top:363.75px;width:21.79px;height:21.75px;line-height:22.45px">52s</div><div class="mc" style="left:447.10px;top:386.35px;width:21.79px;height:21.75px;line-height:22.45px">A4o</div><div class="mc" style="left:469.74px;top:386.35px;width:21.79px;height:21.75px;line-height:22.45px">K4o</div><div class="mc" style="left:492.37px;top:386.35px;width:21.79px;height:21.75px;line-height:22.45px">Q4o</div><div class="mc" style="left:515.00px;top:386.35px;width:21.79px;height:21.75px;line-height:22.45px">J4o</div><div class="mc" style="left:537.64px;top:386.35px;width:21.79px;height:21.75px;line-height:22.45px">T4o</div><div class="mc" style="left:560.27px;top:386.35px;width:21.79px;height:21.75px;line-height:22.45px">94o</div><div class="mc" style="left:582.91px;top:386.35px;width:21.79px;height:21.75px;line-height:22.45px">84o</div><div class="mc" style="left:605.55px;top:386.35px;width:21.79px;height:21.75px;line-height:22.45px">74o</div><div class="mc" style="left:628.18px;top:386.35px;width:21.79px;height:21.75px;line-height:22.45px">64o</div><div class="mc" style="left:650.82px;top:386.35px;width:21.79px;height:21.75px;line-height:22.45px">54o</div><div class="mc" style="left:673.45px;top:386.35px;width:21.79px;height:21.75px;line-height:22.45px">44</div><div class="mc" style="left:696.09px;top:386.35px;width:21.79px;height:21.75px;line-height:22.45px">43s</div><div class="mc" style="left:718.72px;top:386.35px;width:21.79px;height:21.75px;line-height:22.45px">42s</div><div class="mc" style="left:447.10px;top:408.95px;width:21.79px;height:21.75px;line-height:22.45px">A3o</div><div class="mc" style="left:469.74px;top:408.95px;width:21.79px;height:21.75px;line-height:22.45px">K3o</div><div class="mc" style="left:492.37px;top:408.95px;width:21.79px;height:21.75px;line-height:22.45px">Q3o</div><div class="mc" style="left:515.00px;top:408.95px;width:21.79px;height:21.75px;line-height:22.45px">J3o</div><div class="mc" style="left:537.64px;top:408.95px;width:21.79px;height:21.75px;line-height:22.45px">T3o</div><div class="mc" style="left:560.27px;top:408.95px;width:21.79px;height:21.75px;line-height:22.45px">93o</div><div class="mc" style="left:582.91px;top:408.95px;width:21.79px;height:21.75px;line-height:22.45px">83o</div><div class="mc" style="left:605.55px;top:408.95px;width:21.79px;height:21.75px;line-height:22.45px">73o</div><div class="mc" style="left:628.18px;top:408.95px;width:21.79px;height:21.75px;line-height:22.45px">63o</div><div class="mc" style="left:650.82px;top:408.95px;width:21.79px;height:21.75px;line-height:22.45px">53o</div><div class="mc" style="left:673.45px;top:408.95px;width:21.79px;height:21.75px;line-height:22.45px">43o</div><div class="mc" style="left:696.09px;top:408.95px;width:21.79px;height:21.75px;line-height:22.45px">33</div><div class="mc" style="left:718.72px;top:408.95px;width:21.79px;height:21.75px;line-height:22.45px">32s</div><div class="mc" style="left:447.10px;top:431.55px;width:21.79px;height:21.75px;line-height:22.45px">A2o</div><div class="mc" style="left:469.74px;top:431.55px;width:21.79px;height:21.75px;line-height:22.45px">K2o</div><div class="mc" style="left:492.37px;top:431.55px;width:21.79px;height:21.75px;line-height:22.45px">Q2o</div><div class="mc" style="left:515.00px;top:431.55px;width:21.79px;height:21.75px;line-height:22.45px">J2o</div><div class="mc" style="left:537.64px;top:431.55px;width:21.79px;height:21.75px;line-height:22.45px">T2o</div><div class="mc" style="left:560.27px;top:431.55px;width:21.79px;height:21.75px;line-height:22.45px">92o</div><div class="mc" style="left:582.91px;top:431.55px;width:21.79px;height:21.75px;line-height:22.45px">82o</div><div class="mc" style="left:605.55px;top:431.55px;width:21.79px;height:21.75px;line-height:22.45px">72o</div><div class="mc" style="left:628.18px;top:431.55px;width:21.79px;height:21.75px;line-height:22.45px">62o</div><div class="mc" style="left:650.82px;top:431.55px;width:21.79px;height:21.75px;line-height:22.45px">52o</div><div class="mc" style="left:673.45px;top:431.55px;width:21.79px;height:21.75px;line-height:22.45px">42o</div><div class="mc" style="left:696.09px;top:431.55px;width:21.79px;height:21.75px;line-height:22.45px">32o</div><div class="mc" style="left:718.72px;top:431.55px;width:21.79px;height:21.75px;line-height:22.45px">22</div>
<div class="abs" style="left:743.4px;top:277.7px;width:0.8px;height:59px;background:#a8a8a8"></div><div class="abs" style="left:745.7px;top:277.7px;width:0.8px;height:59px;background:#a8a8a8"></div>
<svg class="abs" style="left:447px;top:460.3px" width="293.5" height="26.4" viewBox="447 0 293.5 26.4"><defs><linearGradient id="hg" x1="0" x2="1" y1="0" y2="0"><stop offset="0" stop-color="#24e600"/><stop offset="0.06" stop-color="#34e800"/><stop offset="0.26" stop-color="#6cec00"/><stop offset="0.28" stop-color="#8cf000"/><stop offset="0.45" stop-color="#ccf400"/><stop offset="0.46" stop-color="#ffff00"/><stop offset="0.49" stop-color="#ffee00"/><stop offset="0.5" stop-color="#ffd400"/><stop offset="0.655" stop-color="#ffbc00"/><stop offset="0.665" stop-color="#ff9c00"/><stop offset="0.955" stop-color="#ff7400"/><stop offset="0.965" stop-color="#ff5400"/><stop offset="1" stop-color="#ff3800"/></linearGradient></defs><rect x="447" y="0" width="293.5" height="19.3" fill="#0c7fcb"/><path d="M447,19.3V13.3H451V19.3ZM451,19.3V8.9H453V19.3ZM453,19.3V0.0H457V19.3ZM457,19.3V5.6H458.3V19.3ZM458.3,19.3V3.6H460V19.3ZM460,19.3V15.6H461.6V19.3ZM461.6,19.3V18.8H471V19.3ZM471,19.3V11.3H474V19.3ZM474,19.3V18.9H477.6V19.3ZM477.6,19.3V12.7H479.3V19.3ZM479.3,19.3V18.9H481V19.3ZM481,19.3V12.7H487.5V19.3ZM487.5,19.3V13.6H491.5V19.3ZM491.5,19.3V8.9H493.5V19.3ZM493.5,19.3V10.0H497V19.3ZM497,19.3V12.9H498.5V19.3ZM498.5,19.3V18.8H505V19.3ZM505,19.3V11.3H506V19.3ZM506,19.3V18.8H510V19.3ZM510,19.3V15.6H513.5V19.3ZM513.5,19.3V19.0H520V19.3ZM520,19.3V15.3H522V19.3ZM522,19.3V19.0H526.4V19.3ZM526.4,19.3V8.7H530V19.3ZM530,19.3V7.3H531.7V19.3ZM531.7,19.3V18.3H536.7V19.3ZM536.7,19.3V12.7H545V19.3ZM545,19.3V11.6H547V19.3ZM547,19.3V14.3H551V19.3ZM551,19.3V10.3H553V19.3ZM553,19.3V16.9H554.3V19.3ZM554.3,19.3V2.9H556.3V19.3ZM556.3,19.3V8.9H559.6V19.3ZM559.6,19.3V2.3H561.6V19.3ZM561.6,19.3V6.3H565V19.3ZM565,19.3V4.3H567V19.3ZM567,19.3V7.6H569.6V19.3ZM569.6,19.3V4.3H572.3V19.3ZM572.3,19.3V1.6H575V19.3ZM575,19.3V0.0H602.8V19.3ZM602.8,19.3V11.6H604.8V19.3ZM604.8,19.3V15.6H606V19.3ZM606,19.3V19.0H612V19.3ZM612,19.3V17.3H614V19.3ZM614,19.3V19.0H621.5V19.3ZM621.5,19.3V16.9H623.5V19.3ZM623.5,19.3V1.6H626V19.3ZM626,19.3V8.9H630V19.3ZM630,19.3V4.9H633.4V19.3ZM633.4,19.3V8.9H636V19.3ZM636,19.3V18.8H640.7V19.3ZM640.7,19.3V16.9H645V19.3ZM645,19.3V7.6H651V19.3ZM651,19.3V4.3H654.3V19.3ZM654.3,19.3V16.9H656.3V19.3ZM656.3,19.3V8.9H658.3V19.3ZM658.3,19.3V0.0H661.6V19.3ZM661.6,19.3V6.3H663.6V19.3ZM663.6,19.3V7.6H666.3V19.3ZM666.3,19.3V4.3H669V19.3ZM669,19.3V12.9H671V19.3ZM671,19.3V18.8H679.6V19.3ZM679.6,19.3V8.3H683.6V19.3ZM683.6,19.3V15.6H687.5V19.3ZM687.5,19.3V3.6H689.5V19.3ZM689.5,19.3V0.0H692.9V19.3ZM692.9,19.3V12.9H696.2V19.3ZM696.2,19.3V18.3H698.9V19.3ZM698.9,19.3V12.9H700.2V19.3ZM700.2,19.3V8.9H702V19.3ZM702,19.3V4.3H705V19.3ZM705,19.3V0.0H708.8V19.3ZM708.8,19.3V15.6H711.5V19.3ZM711.5,19.3V0.0H714V19.3ZM714,19.3V11.6H716V19.3ZM716,19.3V0.0H717.5V19.3ZM717.5,19.3V12.3H718.8V19.3ZM718.8,19.3V0.0H726.8V19.3ZM726.8,19.3V2.3H730V19.3ZM730,19.3V0.0H732.8V19.3ZM732.8,19.3V14.3H736V19.3ZM736,19.3V11.6H738V19.3ZM738,19.3V0.0H740.5V19.3Z" fill="#73bb44"/><rect x="447" y="19.9" width="293.5" height="6.5" fill="url(#hg)"/></svg>
<div class="t btn" style="left:533.2px;top:508.3px;width:56.7px;height:21.3px;line-height:23.5px;background:#0c7fcb;color:#fff;border-radius:2px"><span class="cj" style="color:#fff">下注</span> 22</div>
<div class="t btn" style="left:597px;top:508.3px;width:56.7px;height:21.3px;line-height:23.5px;background:#76bc43;color:#fff;border-radius:2px"><span class="cj" style="color:#fff">过牌</span></div>
<div class="t" style="left:544px;top:533.88px;font-size:9.3px;line-height:12px;height:12px;color:#555;width:100px;text-align:center;"><span class="cj" style="color:#555">当前选择</span>:</div>
<div class="t btn" style="left:565.2px;top:545.5px;width:56.6px;height:20.8px;line-height:23px;background:#cbcbcb;color:#f2f2f2;border-radius:2px"><span class="cj" style="color:#f2f2f2">下注</span> 22</div>
</body></html>
